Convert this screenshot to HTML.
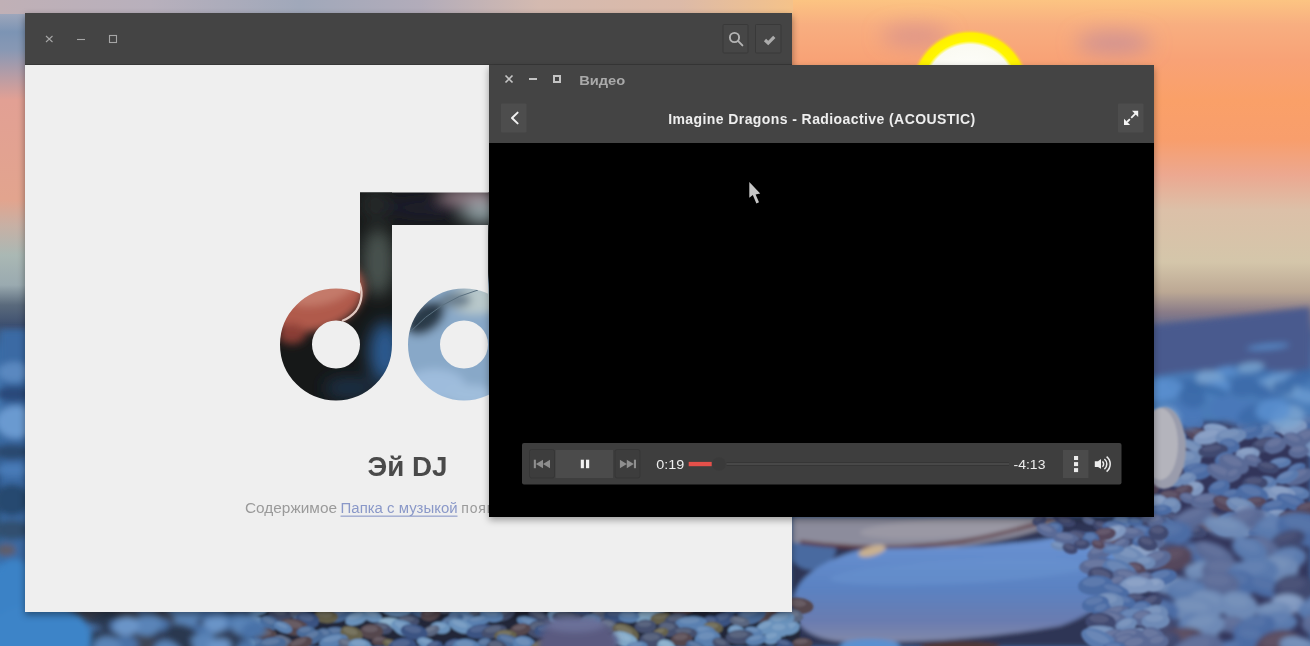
<!DOCTYPE html>
<html><head><meta charset="utf-8">
<style>
*{margin:0;padding:0;box-sizing:border-box}
html,body{width:1310px;height:646px;overflow:hidden;font-family:"Liberation Sans",sans-serif}
body{position:relative;background:#4a6fa0}
#bg{position:absolute;left:0;top:0;width:1310px;height:646px}
.win{position:absolute}
#w1{left:25px;top:13px;width:767px;height:599px;background:#efefef;box-shadow:0 3px 7px rgba(0,0,0,.4)}
#w1 .hb{position:absolute;left:0;top:0;width:767px;height:52px;background:#444444;border-bottom:1px solid #383838}
#w2{left:489px;top:65px;width:665px;height:452px;background:#000;box-shadow:0 3px 7px rgba(0,0,0,.35)}
#w2 .hb{position:absolute;left:0;top:0;width:665px;height:78px;background:#444444}
.ab{position:absolute}
.t{position:absolute;white-space:nowrap}
</style></head><body>
<svg id="bg" width="1310" height="646" viewBox="0 0 1310 646"><defs><linearGradient id="gR" x1="0" y1="0" x2="0" y2="646" gradientUnits="userSpaceOnUse"><stop offset="0.0000" stop-color="#fcc482"/><stop offset="0.0387" stop-color="#f8ae80"/><stop offset="0.0929" stop-color="#f8a276"/><stop offset="0.1548" stop-color="#faa068"/><stop offset="0.2167" stop-color="#f89e6c"/><stop offset="0.2709" stop-color="#eca890"/><stop offset="0.3251" stop-color="#dcc0a8"/><stop offset="0.4056" stop-color="#d4c6aa"/><stop offset="0.4520" stop-color="#bca894"/><stop offset="0.4830" stop-color="#8a7c88"/><stop offset="0.5186" stop-color="#4e6090"/><stop offset="0.6037" stop-color="#4a78b4"/><stop offset="1.0000" stop-color="#44689c"/></linearGradient><linearGradient id="gL" x1="0" y1="0" x2="0" y2="646" gradientUnits="userSpaceOnUse"><stop offset="0.0000" stop-color="#c4b0b4"/><stop offset="0.0186" stop-color="#a0a8bc"/><stop offset="0.0495" stop-color="#7c94b4"/><stop offset="0.0774" stop-color="#8898b4"/><stop offset="0.1115" stop-color="#b09ca8"/><stop offset="0.1548" stop-color="#e2a094"/><stop offset="0.3096" stop-color="#e2a48e"/><stop offset="0.3483" stop-color="#c8b0a4"/><stop offset="0.3947" stop-color="#aab8b4"/><stop offset="0.4412" stop-color="#9aaab0"/><stop offset="0.4721" stop-color="#5a6a7c"/><stop offset="0.5031" stop-color="#3e5070"/><stop offset="0.5418" stop-color="#3a6aa4"/><stop offset="0.6192" stop-color="#4a80b8"/><stop offset="0.6811" stop-color="#3a6aa0"/><stop offset="0.7430" stop-color="#2c5080"/><stop offset="0.8204" stop-color="#305478"/><stop offset="0.8824" stop-color="#3a7cc0"/><stop offset="1.0000" stop-color="#3a80c0"/></linearGradient><linearGradient id="gT" x1="0" y1="0" x2="1310" y2="0" gradientUnits="userSpaceOnUse"><stop offset="0.0000" stop-color="#c0b0b6"/><stop offset="0.1145" stop-color="#b8b0bc"/><stop offset="0.2290" stop-color="#a0a8ba"/><stop offset="0.3206" stop-color="#b2acba"/><stop offset="0.4122" stop-color="#d4bab0"/><stop offset="0.5191" stop-color="#dcbaa8"/><stop offset="0.6031" stop-color="#f4c28a"/><stop offset="1.0000" stop-color="#fcc480"/></linearGradient><radialGradient id="sunG" cx="970" cy="89" r="60" gradientUnits="userSpaceOnUse">
      <stop offset="0" stop-color="#ffffff"/><stop offset="0.74" stop-color="#fafaf2"/>
      <stop offset="0.8" stop-color="#fff600"/><stop offset="0.93" stop-color="#fff000"/>
      <stop offset="1" stop-color="#fcb060" stop-opacity="0"/></radialGradient>
    <linearGradient id="stoneG" x1="0" y1="545" x2="0" y2="640" gradientUnits="userSpaceOnUse"><stop offset="0" stop-color="#6890d0"/><stop offset="0.45" stop-color="#5a82c2"/><stop offset="0.8" stop-color="#6a7cb0"/><stop offset="1" stop-color="#8088aa"/></linearGradient>
    <filter id="b3" x="-100%" y="-100%" width="300%" height="300%"><feGaussianBlur stdDeviation="3"/></filter>
    <filter id="b1" x="-100%" y="-100%" width="300%" height="300%"><feGaussianBlur stdDeviation="1.3"/></filter>
    <filter id="b25" x="-100%" y="-100%" width="300%" height="300%"><feGaussianBlur stdDeviation="2.5"/></filter>
    <filter id="b2" x="-100%" y="-100%" width="300%" height="300%"><feGaussianBlur stdDeviation="2"/></filter>
    <filter id="b10" x="-200%" y="-200%" width="500%" height="500%"><feGaussianBlur stdDeviation="10"/></filter></defs><rect width="1310" height="646" fill="url(#gR)"/>
  <rect width="30" height="646" fill="url(#gL)"/>
  <rect x="0" y="0" width="793" height="14" fill="url(#gT)"/>
  <g filter="url(#b10)">
    <ellipse cx="915" cy="36" rx="34" ry="10" fill="#d08c90" opacity="0.75"/>
    <ellipse cx="1114" cy="43" rx="38" ry="11" fill="#c48c98" opacity="0.8"/>
  </g>
  <circle cx="970" cy="89" r="60" fill="url(#sunG)"/><g filter="url(#b2)"><rect x="792" y="517" width="362" height="129" fill="#2e3454"/><ellipse cx="812.0" cy="548.0" rx="24.0" ry="22.0" fill="#4a6aa0"/><path d="M792 517 H1062 Q1050 530 1000 540 Q940 552 880 550 Q820 547 792 542 Z" fill="#8c8c9c"/><ellipse cx="950.0" cy="528.0" rx="90.0" ry="10.0" fill="#9a98a4" transform="rotate(-3 950.0 528.0)"/><path d="M800 542 Q880 553 960 542 Q1010 533 1055 518" stroke="#5a3038" stroke-width="3.5" fill="none"/><path d="M866 548 Q960 550 1040 540 Q1110 526 1128 548 Q1132 600 1060 626 Q960 644 850 642 Q792 640 792 602 Q798 566 866 548 Z" fill="url(#stoneG)"/><ellipse cx="960.0" cy="572.0" rx="130.0" ry="12.0" fill="#6a94d0" transform="rotate(-3 960.0 572.0)" opacity="0.5"/><ellipse cx="872.0" cy="551.0" rx="14.0" ry="5.0" fill="#c8b090" transform="rotate(-15 872.0 551.0)"/><ellipse cx="870.0" cy="646.0" rx="30.0" ry="7.0" fill="#5a90d0"/><ellipse cx="960.0" cy="646.0" rx="40.0" ry="5.0" fill="#503838"/></g><rect x="1150" y="418" width="160" height="228" fill="#32365a" filter="url(#b3)"/><g filter="url(#b1)"><ellipse cx="1236.0" cy="405.5" rx="11.0" ry="5.7" fill="#8098c0" transform="rotate(-6 1236.0 405.5)"/><ellipse cx="1234.9" cy="403.5" rx="7.1" ry="2.6" fill="#8aa0c5" transform="rotate(-6 1234.9 403.5)"/><ellipse cx="1284.1" cy="406.7" rx="10.6" ry="5.1" fill="#404870" transform="rotate(-8 1284.1 406.7)"/><ellipse cx="1283.0" cy="404.9" rx="6.9" ry="2.3" fill="#4f567b" transform="rotate(-8 1283.0 404.9)"/><ellipse cx="1253.7" cy="407.0" rx="15.3" ry="8.3" fill="#5a6a96" transform="rotate(16 1253.7 407.0)"/><ellipse cx="1252.1" cy="404.1" rx="9.9" ry="3.7" fill="#67759e" transform="rotate(16 1252.1 404.1)"/><ellipse cx="1208.0" cy="409.6" rx="12.5" ry="6.7" fill="#404870" transform="rotate(3 1208.0 409.6)"/><ellipse cx="1206.8" cy="407.2" rx="8.1" ry="3.0" fill="#4f567b" transform="rotate(3 1206.8 407.2)"/><ellipse cx="1264.2" cy="410.9" rx="17.6" ry="8.9" fill="#5a6a96" transform="rotate(20 1264.2 410.9)"/><ellipse cx="1262.4" cy="407.8" rx="11.4" ry="4.0" fill="#67759e" transform="rotate(20 1262.4 407.8)"/><ellipse cx="1224.3" cy="411.7" rx="8.4" ry="5.9" fill="#404870" transform="rotate(-18 1224.3 411.7)"/><ellipse cx="1223.4" cy="409.7" rx="5.5" ry="2.7" fill="#4f567b" transform="rotate(-18 1223.4 409.7)"/><ellipse cx="1155.9" cy="412.8" rx="15.2" ry="7.3" fill="#5a6a96" transform="rotate(-14 1155.9 412.8)"/><ellipse cx="1154.4" cy="410.3" rx="9.9" ry="3.3" fill="#67759e" transform="rotate(-14 1154.4 410.3)"/><ellipse cx="1306.6" cy="414.9" rx="13.6" ry="6.4" fill="#5a7aae" transform="rotate(21 1306.6 414.9)"/><ellipse cx="1305.2" cy="412.7" rx="8.9" ry="2.9" fill="#6784b4" transform="rotate(21 1305.2 412.7)"/><ellipse cx="1180.5" cy="415.0" rx="11.7" ry="8.8" fill="#5a6a96" transform="rotate(-4 1180.5 415.0)"/><ellipse cx="1179.3" cy="411.9" rx="7.6" ry="3.9" fill="#67759e" transform="rotate(-4 1179.3 411.9)"/><ellipse cx="1172.1" cy="415.2" rx="13.8" ry="6.7" fill="#4c6ca4" transform="rotate(-1 1172.1 415.2)"/><ellipse cx="1170.7" cy="412.9" rx="9.0" ry="3.0" fill="#5a77ab" transform="rotate(-1 1170.7 412.9)"/><ellipse cx="1182.6" cy="417.6" rx="11.1" ry="6.0" fill="#4c6ca4" transform="rotate(14 1182.6 417.6)"/><ellipse cx="1181.5" cy="415.5" rx="7.2" ry="2.7" fill="#5a77ab" transform="rotate(14 1181.5 415.5)"/><ellipse cx="1267.3" cy="420.0" rx="11.4" ry="8.3" fill="#4c6ca4" transform="rotate(22 1267.3 420.0)"/><ellipse cx="1266.2" cy="417.1" rx="7.4" ry="3.7" fill="#5a77ab" transform="rotate(22 1266.2 417.1)"/><ellipse cx="1191.7" cy="420.0" rx="12.5" ry="7.4" fill="#4c6ca4" transform="rotate(24 1191.7 420.0)"/><ellipse cx="1190.4" cy="417.4" rx="8.1" ry="3.3" fill="#5a77ab" transform="rotate(24 1190.4 417.4)"/><ellipse cx="1234.0" cy="420.9" rx="12.0" ry="6.6" fill="#404870" transform="rotate(5 1234.0 420.9)"/><ellipse cx="1232.8" cy="418.6" rx="7.8" ry="3.0" fill="#4f567b" transform="rotate(5 1232.8 418.6)"/><ellipse cx="1308.6" cy="421.8" rx="11.6" ry="8.7" fill="#4c6ca4" transform="rotate(2 1308.6 421.8)"/><ellipse cx="1307.4" cy="418.8" rx="7.6" ry="3.9" fill="#5a77ab" transform="rotate(2 1307.4 418.8)"/><ellipse cx="1247.5" cy="423.9" rx="10.7" ry="6.8" fill="#5a6a96" transform="rotate(-7 1247.5 423.9)"/><ellipse cx="1246.4" cy="421.5" rx="7.0" ry="3.1" fill="#67759e" transform="rotate(-7 1246.4 421.5)"/><ellipse cx="1157.1" cy="424.8" rx="14.2" ry="6.7" fill="#4c6ca4" transform="rotate(-2 1157.1 424.8)"/><ellipse cx="1155.7" cy="422.5" rx="9.2" ry="3.0" fill="#5a77ab" transform="rotate(-2 1155.7 422.5)"/><ellipse cx="1284.4" cy="425.7" rx="16.8" ry="8.6" fill="#6e8ab6" transform="rotate(14 1284.4 425.7)"/><ellipse cx="1282.7" cy="422.7" rx="10.9" ry="3.9" fill="#7993bb" transform="rotate(14 1282.7 422.7)"/><ellipse cx="1140.4" cy="426.9" rx="12.5" ry="7.5" fill="#404870" transform="rotate(-1 1140.4 426.9)"/><ellipse cx="1139.2" cy="424.3" rx="8.1" ry="3.4" fill="#4f567b" transform="rotate(-1 1139.2 424.3)"/><ellipse cx="1293.3" cy="428.0" rx="13.9" ry="8.1" fill="#8098c0" transform="rotate(-15 1293.3 428.0)"/><ellipse cx="1292.0" cy="425.2" rx="9.0" ry="3.7" fill="#8aa0c5" transform="rotate(-15 1292.0 425.2)"/><ellipse cx="1216.2" cy="429.1" rx="13.0" ry="5.7" fill="#8098c0" transform="rotate(10 1216.2 429.1)"/><ellipse cx="1214.9" cy="427.1" rx="8.4" ry="2.5" fill="#8aa0c5" transform="rotate(10 1214.9 427.1)"/><ellipse cx="1264.8" cy="431.2" rx="11.1" ry="7.7" fill="#5a7aae" transform="rotate(-18 1264.8 431.2)"/><ellipse cx="1263.7" cy="428.5" rx="7.2" ry="3.5" fill="#6784b4" transform="rotate(-18 1263.7 428.5)"/><ellipse cx="1250.7" cy="431.6" rx="12.6" ry="7.2" fill="#4c6ca4" transform="rotate(-17 1250.7 431.6)"/><ellipse cx="1249.4" cy="429.1" rx="8.2" ry="3.2" fill="#5a77ab" transform="rotate(-17 1249.4 429.1)"/><ellipse cx="1142.1" cy="431.7" rx="14.5" ry="6.4" fill="#4c6ca4" transform="rotate(16 1142.1 431.7)"/><ellipse cx="1140.7" cy="429.5" rx="9.5" ry="2.9" fill="#5a77ab" transform="rotate(16 1140.7 429.5)"/><ellipse cx="1198.5" cy="434.6" rx="14.9" ry="6.8" fill="#54465c" transform="rotate(24 1198.5 434.6)"/><ellipse cx="1197.0" cy="432.2" rx="9.7" ry="3.0" fill="#615469" transform="rotate(24 1197.0 432.2)"/><ellipse cx="1209.4" cy="436.6" rx="16.2" ry="7.3" fill="#8098c0" transform="rotate(-14 1209.4 436.6)"/><ellipse cx="1207.8" cy="434.1" rx="10.5" ry="3.3" fill="#8aa0c5" transform="rotate(-14 1207.8 434.1)"/><ellipse cx="1230.8" cy="436.6" rx="15.6" ry="8.2" fill="#6e8ab6" transform="rotate(-10 1230.8 436.6)"/><ellipse cx="1229.2" cy="433.7" rx="10.2" ry="3.7" fill="#7993bb" transform="rotate(-10 1229.2 433.7)"/><ellipse cx="1306.5" cy="437.8" rx="12.5" ry="8.8" fill="#5a6a96" transform="rotate(-17 1306.5 437.8)"/><ellipse cx="1305.2" cy="434.7" rx="8.2" ry="4.0" fill="#67759e" transform="rotate(-17 1305.2 434.7)"/><ellipse cx="1155.4" cy="438.1" rx="10.7" ry="6.6" fill="#5a6a96" transform="rotate(-21 1155.4 438.1)"/><ellipse cx="1154.3" cy="435.8" rx="7.0" ry="3.0" fill="#67759e" transform="rotate(-21 1154.3 435.8)"/><ellipse cx="1176.1" cy="438.9" rx="10.6" ry="6.5" fill="#5a7aae" transform="rotate(-18 1176.1 438.9)"/><ellipse cx="1175.0" cy="436.7" rx="6.9" ry="2.9" fill="#6784b4" transform="rotate(-18 1175.0 436.7)"/><ellipse cx="1293.9" cy="440.2" rx="11.3" ry="7.3" fill="#5a6a96" transform="rotate(22 1293.9 440.2)"/><ellipse cx="1292.8" cy="437.7" rx="7.3" ry="3.3" fill="#67759e" transform="rotate(22 1292.8 437.7)"/><ellipse cx="1273.0" cy="440.9" rx="9.8" ry="7.4" fill="#4c6ca4" transform="rotate(7 1273.0 440.9)"/><ellipse cx="1272.1" cy="438.3" rx="6.3" ry="3.3" fill="#5a77ab" transform="rotate(7 1272.1 438.3)"/><ellipse cx="1265.5" cy="444.8" rx="14.6" ry="7.4" fill="#404870" transform="rotate(-12 1265.5 444.8)"/><ellipse cx="1264.0" cy="442.2" rx="9.5" ry="3.3" fill="#4f567b" transform="rotate(-12 1264.0 442.2)"/><ellipse cx="1275.2" cy="445.5" rx="11.5" ry="8.0" fill="#5a6a96" transform="rotate(-18 1275.2 445.5)"/><ellipse cx="1274.0" cy="442.7" rx="7.5" ry="3.6" fill="#67759e" transform="rotate(-18 1274.0 442.7)"/><ellipse cx="1229.6" cy="445.7" rx="10.6" ry="7.0" fill="#4c6ca4" transform="rotate(11 1229.6 445.7)"/><ellipse cx="1228.5" cy="443.2" rx="6.9" ry="3.2" fill="#5a77ab" transform="rotate(11 1228.5 443.2)"/><ellipse cx="1148.1" cy="446.5" rx="11.1" ry="8.1" fill="#6e8ab6" transform="rotate(-19 1148.1 446.5)"/><ellipse cx="1147.0" cy="443.7" rx="7.2" ry="3.7" fill="#7993bb" transform="rotate(-19 1147.0 443.7)"/><ellipse cx="1162.6" cy="446.7" rx="11.6" ry="8.5" fill="#5a6a96" transform="rotate(-9 1162.6 446.7)"/><ellipse cx="1161.4" cy="443.7" rx="7.5" ry="3.8" fill="#67759e" transform="rotate(-9 1161.4 443.7)"/><ellipse cx="1315.6" cy="448.4" rx="11.4" ry="8.7" fill="#6e8ab6" transform="rotate(-17 1315.6 448.4)"/><ellipse cx="1314.4" cy="445.3" rx="7.4" ry="3.9" fill="#7993bb" transform="rotate(-17 1314.4 445.3)"/><ellipse cx="1191.4" cy="448.4" rx="15.8" ry="7.7" fill="#6e8ab6" transform="rotate(24 1191.4 448.4)"/><ellipse cx="1189.8" cy="445.7" rx="10.3" ry="3.5" fill="#7993bb" transform="rotate(24 1189.8 445.7)"/><ellipse cx="1213.1" cy="450.6" rx="15.0" ry="6.8" fill="#404870" transform="rotate(-7 1213.1 450.6)"/><ellipse cx="1211.6" cy="448.2" rx="9.8" ry="3.0" fill="#4f567b" transform="rotate(-7 1211.6 448.2)"/><ellipse cx="1298.7" cy="451.6" rx="10.4" ry="6.7" fill="#5a6a96" transform="rotate(-6 1298.7 451.6)"/><ellipse cx="1297.7" cy="449.2" rx="6.8" ry="3.0" fill="#67759e" transform="rotate(-6 1297.7 449.2)"/><ellipse cx="1247.7" cy="453.8" rx="12.1" ry="6.5" fill="#8098c0" transform="rotate(-3 1247.7 453.8)"/><ellipse cx="1246.5" cy="451.5" rx="7.9" ry="2.9" fill="#8aa0c5" transform="rotate(-3 1246.5 451.5)"/><ellipse cx="1181.5" cy="455.3" rx="14.4" ry="8.5" fill="#404870" transform="rotate(12 1181.5 455.3)"/><ellipse cx="1180.1" cy="452.3" rx="9.3" ry="3.8" fill="#4f567b" transform="rotate(12 1180.1 452.3)"/><ellipse cx="1224.0" cy="458.4" rx="10.0" ry="5.8" fill="#4c6ca4" transform="rotate(-23 1224.0 458.4)"/><ellipse cx="1223.0" cy="456.4" rx="6.5" ry="2.6" fill="#5a77ab" transform="rotate(-23 1223.0 456.4)"/><ellipse cx="1186.9" cy="459.6" rx="14.3" ry="9.1" fill="#6e8ab6" transform="rotate(-1 1186.9 459.6)"/><ellipse cx="1185.5" cy="456.4" rx="9.3" ry="4.1" fill="#7993bb" transform="rotate(-1 1185.5 456.4)"/><ellipse cx="1163.0" cy="459.9" rx="15.1" ry="8.2" fill="#5a6a96" transform="rotate(-20 1163.0 459.9)"/><ellipse cx="1161.5" cy="457.0" rx="9.8" ry="3.7" fill="#67759e" transform="rotate(-20 1161.5 457.0)"/><ellipse cx="1252.9" cy="460.6" rx="9.3" ry="6.0" fill="#5a6a96" transform="rotate(19 1252.9 460.6)"/><ellipse cx="1252.0" cy="458.5" rx="6.0" ry="2.7" fill="#67759e" transform="rotate(19 1252.0 458.5)"/><ellipse cx="1149.0" cy="461.5" rx="9.7" ry="5.8" fill="#4c6ca4" transform="rotate(-11 1149.0 461.5)"/><ellipse cx="1148.0" cy="459.5" rx="6.3" ry="2.6" fill="#5a77ab" transform="rotate(-11 1148.0 459.5)"/><ellipse cx="1280.2" cy="462.8" rx="11.1" ry="5.4" fill="#5a7aae" transform="rotate(-7 1280.2 462.8)"/><ellipse cx="1279.1" cy="460.9" rx="7.2" ry="2.4" fill="#6784b4" transform="rotate(-7 1279.1 460.9)"/><ellipse cx="1233.9" cy="464.1" rx="15.8" ry="9.0" fill="#5a6a96" transform="rotate(22 1233.9 464.1)"/><ellipse cx="1232.4" cy="460.9" rx="10.3" ry="4.1" fill="#67759e" transform="rotate(22 1232.4 460.9)"/><ellipse cx="1268.1" cy="467.5" rx="11.3" ry="5.7" fill="#404870" transform="rotate(11 1268.1 467.5)"/><ellipse cx="1267.0" cy="465.5" rx="7.3" ry="2.6" fill="#4f567b" transform="rotate(11 1267.0 465.5)"/><ellipse cx="1296.7" cy="468.6" rx="9.5" ry="5.2" fill="#4c6ca4" transform="rotate(-21 1296.7 468.6)"/><ellipse cx="1295.7" cy="466.8" rx="6.2" ry="2.4" fill="#5a77ab" transform="rotate(-21 1295.7 466.8)"/><ellipse cx="1197.5" cy="469.5" rx="14.3" ry="6.6" fill="#4c6ca4" transform="rotate(-2 1197.5 469.5)"/><ellipse cx="1196.1" cy="467.2" rx="9.3" ry="3.0" fill="#5a77ab" transform="rotate(-2 1196.1 467.2)"/><ellipse cx="1199.9" cy="472.5" rx="12.5" ry="7.1" fill="#4c6ca4" transform="rotate(-13 1199.9 472.5)"/><ellipse cx="1198.6" cy="470.0" rx="8.1" ry="3.2" fill="#5a77ab" transform="rotate(-13 1198.6 470.0)"/><ellipse cx="1221.5" cy="473.0" rx="15.7" ry="8.1" fill="#5a6a96" transform="rotate(24 1221.5 473.0)"/><ellipse cx="1219.9" cy="470.2" rx="10.2" ry="3.7" fill="#67759e" transform="rotate(24 1219.9 470.2)"/><ellipse cx="1233.6" cy="474.7" rx="8.3" ry="6.4" fill="#5a6a96" transform="rotate(-23 1233.6 474.7)"/><ellipse cx="1232.8" cy="472.5" rx="5.4" ry="2.9" fill="#67759e" transform="rotate(-23 1232.8 472.5)"/><ellipse cx="1298.9" cy="476.9" rx="15.2" ry="7.4" fill="#5a6a96" transform="rotate(-20 1298.9 476.9)"/><ellipse cx="1297.3" cy="474.3" rx="9.9" ry="3.3" fill="#67759e" transform="rotate(-20 1297.3 474.3)"/><ellipse cx="1287.2" cy="477.0" rx="12.0" ry="6.0" fill="#5a7aae" transform="rotate(-22 1287.2 477.0)"/><ellipse cx="1286.0" cy="474.9" rx="7.8" ry="2.7" fill="#6784b4" transform="rotate(-22 1286.0 474.9)"/><ellipse cx="1187.2" cy="478.7" rx="9.2" ry="6.3" fill="#6e8ab6" transform="rotate(-12 1187.2 478.7)"/><ellipse cx="1186.3" cy="476.5" rx="6.0" ry="2.8" fill="#7993bb" transform="rotate(-12 1186.3 476.5)"/><ellipse cx="1172.3" cy="479.8" rx="11.1" ry="5.9" fill="#6e8ab6" transform="rotate(24 1172.3 479.8)"/><ellipse cx="1171.2" cy="477.8" rx="7.2" ry="2.7" fill="#7993bb" transform="rotate(24 1171.2 477.8)"/><ellipse cx="1145.9" cy="481.1" rx="10.9" ry="6.1" fill="#5a6a96" transform="rotate(-21 1145.9 481.1)"/><ellipse cx="1144.8" cy="479.0" rx="7.1" ry="2.7" fill="#67759e" transform="rotate(-21 1144.8 479.0)"/><ellipse cx="1267.2" cy="482.7" rx="9.8" ry="6.8" fill="#5a7aae" transform="rotate(5 1267.2 482.7)"/><ellipse cx="1266.2" cy="480.3" rx="6.3" ry="3.1" fill="#6784b4" transform="rotate(5 1266.2 480.3)"/><ellipse cx="1255.1" cy="483.0" rx="12.7" ry="6.9" fill="#404870" transform="rotate(-1 1255.1 483.0)"/><ellipse cx="1253.8" cy="480.6" rx="8.2" ry="3.1" fill="#4f567b" transform="rotate(-1 1253.8 480.6)"/><ellipse cx="1147.3" cy="486.4" rx="12.2" ry="7.8" fill="#54465c" transform="rotate(21 1147.3 486.4)"/><ellipse cx="1146.1" cy="483.7" rx="7.9" ry="3.5" fill="#615469" transform="rotate(21 1146.1 483.7)"/><ellipse cx="1219.2" cy="487.9" rx="11.3" ry="7.4" fill="#4c6ca4" transform="rotate(-19 1219.2 487.9)"/><ellipse cx="1218.1" cy="485.3" rx="7.3" ry="3.4" fill="#5a77ab" transform="rotate(-19 1218.1 485.3)"/><ellipse cx="1194.3" cy="488.7" rx="9.7" ry="7.3" fill="#8098c0" transform="rotate(-9 1194.3 488.7)"/><ellipse cx="1193.3" cy="486.1" rx="6.3" ry="3.3" fill="#8aa0c5" transform="rotate(-9 1193.3 486.1)"/><ellipse cx="1319.8" cy="490.4" rx="8.9" ry="5.6" fill="#6e8ab6" transform="rotate(-4 1319.8 490.4)"/><ellipse cx="1318.9" cy="488.4" rx="5.8" ry="2.5" fill="#7993bb" transform="rotate(-4 1318.9 488.4)"/><ellipse cx="1182.3" cy="492.0" rx="11.6" ry="6.3" fill="#54465c" transform="rotate(-23 1182.3 492.0)"/><ellipse cx="1181.2" cy="489.8" rx="7.5" ry="2.9" fill="#615469" transform="rotate(-23 1181.2 489.8)"/><ellipse cx="1268.2" cy="492.8" rx="10.1" ry="6.1" fill="#6e8ab6" transform="rotate(-4 1268.2 492.8)"/><ellipse cx="1267.2" cy="490.7" rx="6.5" ry="2.7" fill="#7993bb" transform="rotate(-4 1267.2 490.7)"/><ellipse cx="1297.2" cy="493.0" rx="12.7" ry="6.8" fill="#5a7aae" transform="rotate(8 1297.2 493.0)"/><ellipse cx="1296.0" cy="490.6" rx="8.3" ry="3.1" fill="#6784b4" transform="rotate(8 1296.0 490.6)"/><ellipse cx="1281.4" cy="493.6" rx="14.2" ry="7.8" fill="#8098c0" transform="rotate(8 1281.4 493.6)"/><ellipse cx="1280.0" cy="490.9" rx="9.2" ry="3.5" fill="#8aa0c5" transform="rotate(8 1280.0 490.9)"/><ellipse cx="1252.7" cy="493.9" rx="16.1" ry="9.2" fill="#4c6ca4" transform="rotate(16 1252.7 493.9)"/><ellipse cx="1251.1" cy="490.7" rx="10.5" ry="4.1" fill="#5a77ab" transform="rotate(16 1251.1 490.7)"/><ellipse cx="1231.1" cy="494.9" rx="10.2" ry="5.9" fill="#4c6ca4" transform="rotate(-12 1231.1 494.9)"/><ellipse cx="1230.0" cy="492.8" rx="6.6" ry="2.6" fill="#5a77ab" transform="rotate(-12 1230.0 492.8)"/><ellipse cx="1171.0" cy="496.3" rx="12.2" ry="6.6" fill="#54465c" transform="rotate(3 1171.0 496.3)"/><ellipse cx="1169.7" cy="494.0" rx="8.0" ry="3.0" fill="#615469" transform="rotate(3 1169.7 494.0)"/><ellipse cx="1187.7" cy="498.2" rx="8.3" ry="5.1" fill="#5a6a96" transform="rotate(18 1187.7 498.2)"/><ellipse cx="1186.9" cy="496.4" rx="5.4" ry="2.3" fill="#67759e" transform="rotate(18 1186.9 496.4)"/><ellipse cx="1206.0" cy="501.0" rx="15.4" ry="7.8" fill="#5a6a96" transform="rotate(-7 1206.0 501.0)"/><ellipse cx="1204.4" cy="498.3" rx="10.0" ry="3.5" fill="#67759e" transform="rotate(-7 1204.4 498.3)"/><ellipse cx="1158.8" cy="501.6" rx="9.4" ry="7.0" fill="#8098c0" transform="rotate(11 1158.8 501.6)"/><ellipse cx="1157.9" cy="499.1" rx="6.1" ry="3.1" fill="#8aa0c5" transform="rotate(11 1157.9 499.1)"/><ellipse cx="1256.0" cy="502.2" rx="10.6" ry="5.4" fill="#54465c" transform="rotate(-3 1256.0 502.2)"/><ellipse cx="1254.9" cy="500.3" rx="6.9" ry="2.4" fill="#615469" transform="rotate(-3 1254.9 500.3)"/><ellipse cx="1291.9" cy="502.2" rx="16.4" ry="7.4" fill="#4c6ca4" transform="rotate(21 1291.9 502.2)"/><ellipse cx="1290.2" cy="499.6" rx="10.7" ry="3.3" fill="#5a77ab" transform="rotate(21 1290.2 499.6)"/><ellipse cx="1224.4" cy="503.5" rx="12.0" ry="7.0" fill="#54465c" transform="rotate(22 1224.4 503.5)"/><ellipse cx="1223.2" cy="501.1" rx="7.8" ry="3.1" fill="#615469" transform="rotate(22 1223.2 501.1)"/><ellipse cx="1241.0" cy="505.7" rx="15.0" ry="7.6" fill="#6e8ab6" transform="rotate(16 1241.0 505.7)"/><ellipse cx="1239.5" cy="503.0" rx="9.8" ry="3.4" fill="#7993bb" transform="rotate(16 1239.5 503.0)"/><ellipse cx="1171.3" cy="505.7" rx="9.9" ry="8.2" fill="#6e8ab6" transform="rotate(4 1171.3 505.7)"/><ellipse cx="1170.3" cy="502.9" rx="6.5" ry="3.7" fill="#7993bb" transform="rotate(4 1170.3 502.9)"/><ellipse cx="1274.9" cy="506.8" rx="14.3" ry="6.9" fill="#4c6ca4" transform="rotate(-11 1274.9 506.8)"/><ellipse cx="1273.5" cy="504.3" rx="9.3" ry="3.1" fill="#5a77ab" transform="rotate(-11 1273.5 504.3)"/><ellipse cx="1306.8" cy="508.3" rx="11.3" ry="6.1" fill="#54465c" transform="rotate(-13 1306.8 508.3)"/><ellipse cx="1305.7" cy="506.2" rx="7.3" ry="2.7" fill="#615469" transform="rotate(-13 1305.7 506.2)"/><ellipse cx="1245.6" cy="513.5" rx="10.6" ry="8.0" fill="#8098c0" transform="rotate(17 1245.6 513.5)"/><ellipse cx="1244.5" cy="510.8" rx="6.9" ry="3.6" fill="#8aa0c5" transform="rotate(17 1244.5 510.8)"/><ellipse cx="1277.3" cy="516.5" rx="12.6" ry="6.7" fill="#8098c0" transform="rotate(-0 1277.3 516.5)"/><ellipse cx="1276.0" cy="514.1" rx="8.2" ry="3.0" fill="#8aa0c5" transform="rotate(-0 1276.0 514.1)"/><ellipse cx="1211.0" cy="517.1" rx="8.8" ry="5.1" fill="#54465c" transform="rotate(20 1211.0 517.1)"/><ellipse cx="1210.1" cy="515.3" rx="5.7" ry="2.3" fill="#615469" transform="rotate(20 1210.1 515.3)"/><ellipse cx="1171.2" cy="517.7" rx="12.3" ry="6.0" fill="#404870" transform="rotate(18 1171.2 517.7)"/><ellipse cx="1170.0" cy="515.6" rx="8.0" ry="2.7" fill="#4f567b" transform="rotate(18 1170.0 515.6)"/><ellipse cx="1261.0" cy="518.3" rx="14.7" ry="7.3" fill="#6e8ab6" transform="rotate(1 1261.0 518.3)"/><ellipse cx="1259.5" cy="515.8" rx="9.5" ry="3.3" fill="#7993bb" transform="rotate(1 1259.5 515.8)"/><ellipse cx="1228.2" cy="520.0" rx="11.3" ry="7.2" fill="#4c6ca4" transform="rotate(-24 1228.2 520.0)"/><ellipse cx="1227.1" cy="517.5" rx="7.3" ry="3.2" fill="#5a77ab" transform="rotate(-24 1227.1 517.5)"/><ellipse cx="1303.9" cy="520.0" rx="11.0" ry="6.6" fill="#54465c" transform="rotate(-5 1303.9 520.0)"/><ellipse cx="1302.8" cy="517.7" rx="7.2" ry="3.0" fill="#615469" transform="rotate(-5 1302.8 517.7)"/><ellipse cx="1294.2" cy="520.6" rx="16.8" ry="9.9" fill="#54465c" transform="rotate(9 1294.2 520.6)"/><ellipse cx="1292.6" cy="517.2" rx="10.9" ry="4.5" fill="#615469" transform="rotate(9 1292.6 517.2)"/><ellipse cx="1197.1" cy="521.4" rx="14.2" ry="7.0" fill="#404870" transform="rotate(9 1197.1 521.4)"/><ellipse cx="1195.7" cy="518.9" rx="9.2" ry="3.2" fill="#4f567b" transform="rotate(9 1195.7 518.9)"/><ellipse cx="1158.6" cy="522.8" rx="11.5" ry="6.2" fill="#6e8ab6" transform="rotate(-7 1158.6 522.8)"/><ellipse cx="1157.4" cy="520.6" rx="7.5" ry="2.8" fill="#7993bb" transform="rotate(-7 1157.4 520.6)"/><ellipse cx="1311.4" cy="525.0" rx="14.2" ry="8.0" fill="#4c6ca4" transform="rotate(21 1311.4 525.0)"/><ellipse cx="1310.0" cy="522.1" rx="9.3" ry="3.6" fill="#5a77ab" transform="rotate(21 1310.0 522.1)"/><ellipse cx="1207.5" cy="525.6" rx="12.4" ry="5.6" fill="#54465c" transform="rotate(8 1207.5 525.6)"/><ellipse cx="1206.3" cy="523.6" rx="8.0" ry="2.5" fill="#615469" transform="rotate(8 1206.3 523.6)"/><ellipse cx="1239.9" cy="527.2" rx="17.1" ry="9.1" fill="#8098c0" transform="rotate(12 1239.9 527.2)"/><ellipse cx="1238.2" cy="524.0" rx="11.1" ry="4.1" fill="#8aa0c5" transform="rotate(12 1238.2 524.0)"/><ellipse cx="1163.7" cy="527.5" rx="11.5" ry="7.6" fill="#5a7aae" transform="rotate(-13 1163.7 527.5)"/><ellipse cx="1162.5" cy="524.9" rx="7.5" ry="3.4" fill="#6784b4" transform="rotate(-13 1162.5 524.9)"/><ellipse cx="1300.4" cy="527.7" rx="15.1" ry="8.3" fill="#6e8ab6" transform="rotate(-5 1300.4 527.7)"/><ellipse cx="1298.9" cy="524.8" rx="9.8" ry="3.7" fill="#7993bb" transform="rotate(-5 1298.9 524.8)"/><ellipse cx="1224.8" cy="528.7" rx="11.6" ry="7.2" fill="#5a7aae" transform="rotate(6 1224.8 528.7)"/><ellipse cx="1223.7" cy="526.2" rx="7.5" ry="3.2" fill="#6784b4" transform="rotate(6 1223.7 526.2)"/><ellipse cx="1146.4" cy="530.1" rx="10.1" ry="7.4" fill="#404870" transform="rotate(11 1146.4 530.1)"/><ellipse cx="1145.4" cy="527.6" rx="6.5" ry="3.3" fill="#4f567b" transform="rotate(11 1145.4 527.6)"/><ellipse cx="1260.7" cy="530.4" rx="13.7" ry="6.2" fill="#4c6ca4" transform="rotate(-12 1260.7 530.4)"/><ellipse cx="1259.4" cy="528.2" rx="8.9" ry="2.8" fill="#5a77ab" transform="rotate(-12 1259.4 528.2)"/><ellipse cx="1191.8" cy="530.5" rx="15.2" ry="6.7" fill="#404870" transform="rotate(13 1191.8 530.5)"/><ellipse cx="1190.3" cy="528.1" rx="9.9" ry="3.0" fill="#4f567b" transform="rotate(13 1190.3 528.1)"/><ellipse cx="1280.0" cy="532.1" rx="9.2" ry="6.6" fill="#8098c0" transform="rotate(19 1280.0 532.1)"/><ellipse cx="1279.1" cy="529.8" rx="6.0" ry="3.0" fill="#8aa0c5" transform="rotate(19 1279.1 529.8)"/><ellipse cx="1172.9" cy="532.4" rx="13.2" ry="7.7" fill="#5a6a96" transform="rotate(20 1172.9 532.4)"/><ellipse cx="1171.5" cy="529.7" rx="8.6" ry="3.5" fill="#67759e" transform="rotate(20 1171.5 529.7)"/></g><g filter="url(#b25)"><ellipse cx="1192.9" cy="517.8" rx="21.6" ry="10.3" fill="#5a6a96" transform="rotate(-21 1192.9 517.8)"/><ellipse cx="1190.7" cy="514.2" rx="14.0" ry="4.6" fill="#63729c" transform="rotate(-21 1190.7 514.2)"/><ellipse cx="1244.2" cy="520.5" rx="22.1" ry="11.5" fill="#5a6a96" transform="rotate(-22 1244.2 520.5)"/><ellipse cx="1242.0" cy="516.4" rx="14.4" ry="5.2" fill="#63729c" transform="rotate(-22 1242.0 516.4)"/><ellipse cx="1151.4" cy="522.2" rx="21.9" ry="11.2" fill="#404870" transform="rotate(20 1151.4 522.2)"/><ellipse cx="1149.2" cy="518.3" rx="14.2" ry="5.0" fill="#4b5278" transform="rotate(20 1149.2 518.3)"/><ellipse cx="1226.4" cy="527.1" rx="23.1" ry="10.7" fill="#6e8ab6" transform="rotate(13 1226.4 527.1)"/><ellipse cx="1224.1" cy="523.4" rx="15.0" ry="4.8" fill="#7691ba" transform="rotate(13 1224.1 523.4)"/><ellipse cx="1277.2" cy="527.7" rx="22.8" ry="12.8" fill="#5a7aae" transform="rotate(-6 1277.2 527.7)"/><ellipse cx="1274.9" cy="523.2" rx="14.8" ry="5.8" fill="#6381b2" transform="rotate(-6 1274.9 523.2)"/><ellipse cx="1303.7" cy="529.3" rx="27.6" ry="16.5" fill="#4c6ca4" transform="rotate(14 1303.7 529.3)"/><ellipse cx="1300.9" cy="523.6" rx="17.9" ry="7.4" fill="#5674a9" transform="rotate(14 1300.9 523.6)"/><ellipse cx="1169.1" cy="534.2" rx="23.7" ry="13.5" fill="#4c6ca4" transform="rotate(-4 1169.1 534.2)"/><ellipse cx="1166.7" cy="529.4" rx="15.4" ry="6.1" fill="#5674a9" transform="rotate(-4 1166.7 529.4)"/><ellipse cx="1287.6" cy="540.6" rx="18.4" ry="10.0" fill="#404870" transform="rotate(-19 1287.6 540.6)"/><ellipse cx="1285.8" cy="537.1" rx="12.0" ry="4.5" fill="#4b5278" transform="rotate(-19 1285.8 537.1)"/><ellipse cx="1261.6" cy="545.6" rx="17.4" ry="8.8" fill="#5a6a96" transform="rotate(20 1261.6 545.6)"/><ellipse cx="1259.9" cy="542.5" rx="11.3" ry="3.9" fill="#63729c" transform="rotate(20 1259.9 542.5)"/><ellipse cx="1149.4" cy="545.7" rx="21.1" ry="11.6" fill="#8098c0" transform="rotate(23 1149.4 545.7)"/><ellipse cx="1147.3" cy="541.7" rx="13.7" ry="5.2" fill="#879ec3" transform="rotate(23 1147.3 541.7)"/><ellipse cx="1249.6" cy="549.5" rx="18.4" ry="11.3" fill="#5a7aae" transform="rotate(22 1249.6 549.5)"/><ellipse cx="1247.7" cy="545.5" rx="11.9" ry="5.1" fill="#6381b2" transform="rotate(22 1247.7 545.5)"/><ellipse cx="1196.1" cy="552.1" rx="14.4" ry="9.3" fill="#4c6ca4" transform="rotate(13 1196.1 552.1)"/><ellipse cx="1194.7" cy="548.9" rx="9.4" ry="4.2" fill="#5674a9" transform="rotate(13 1194.7 548.9)"/><ellipse cx="1213.8" cy="553.5" rx="21.7" ry="10.0" fill="#5a6a96" transform="rotate(24 1213.8 553.5)"/><ellipse cx="1211.7" cy="550.0" rx="14.1" ry="4.5" fill="#63729c" transform="rotate(24 1211.7 550.0)"/><ellipse cx="1165.4" cy="554.0" rx="18.7" ry="11.2" fill="#404870" transform="rotate(-6 1165.4 554.0)"/><ellipse cx="1163.5" cy="550.1" rx="12.2" ry="5.1" fill="#4b5278" transform="rotate(-6 1163.5 550.1)"/><ellipse cx="1287.5" cy="559.1" rx="19.3" ry="11.6" fill="#5a7aae" transform="rotate(-13 1287.5 559.1)"/><ellipse cx="1285.5" cy="555.0" rx="12.5" ry="5.2" fill="#6381b2" transform="rotate(-13 1285.5 555.0)"/><ellipse cx="1173.9" cy="559.1" rx="19.2" ry="12.5" fill="#54465c" transform="rotate(-18 1173.9 559.1)"/><ellipse cx="1171.9" cy="554.7" rx="12.5" ry="5.6" fill="#5e5165" transform="rotate(-18 1171.9 554.7)"/><ellipse cx="1146.3" cy="559.9" rx="22.1" ry="9.9" fill="#54465c" transform="rotate(-4 1146.3 559.9)"/><ellipse cx="1144.1" cy="556.5" rx="14.4" ry="4.4" fill="#5e5165" transform="rotate(-4 1144.1 556.5)"/><ellipse cx="1277.5" cy="568.2" rx="21.6" ry="13.2" fill="#6e8ab6" transform="rotate(0 1277.5 568.2)"/><ellipse cx="1275.4" cy="563.6" rx="14.0" ry="5.9" fill="#7691ba" transform="rotate(0 1275.4 563.6)"/><ellipse cx="1199.9" cy="570.2" rx="15.8" ry="9.1" fill="#6e8ab6" transform="rotate(-10 1199.9 570.2)"/><ellipse cx="1198.3" cy="567.0" rx="10.3" ry="4.1" fill="#7691ba" transform="rotate(-10 1198.3 567.0)"/><ellipse cx="1223.1" cy="571.3" rx="21.4" ry="13.4" fill="#5a6a96" transform="rotate(2 1223.1 571.3)"/><ellipse cx="1221.0" cy="566.6" rx="13.9" ry="6.0" fill="#63729c" transform="rotate(2 1221.0 566.6)"/><ellipse cx="1252.4" cy="573.5" rx="26.4" ry="15.1" fill="#5a7aae" transform="rotate(-10 1252.4 573.5)"/><ellipse cx="1249.7" cy="568.2" rx="17.2" ry="6.8" fill="#6381b2" transform="rotate(-10 1249.7 568.2)"/><ellipse cx="1141.4" cy="580.9" rx="20.8" ry="8.8" fill="#5a6a96" transform="rotate(12 1141.4 580.9)"/><ellipse cx="1139.3" cy="577.8" rx="13.5" ry="3.9" fill="#63729c" transform="rotate(12 1139.3 577.8)"/><ellipse cx="1237.0" cy="583.9" rx="19.9" ry="13.9" fill="#4c6ca4" transform="rotate(3 1237.0 583.9)"/><ellipse cx="1235.0" cy="579.0" rx="13.0" ry="6.2" fill="#5674a9" transform="rotate(3 1235.0 579.0)"/><ellipse cx="1219.4" cy="584.3" rx="20.1" ry="12.9" fill="#5a6a96" transform="rotate(3 1219.4 584.3)"/><ellipse cx="1217.4" cy="579.8" rx="13.1" ry="5.8" fill="#63729c" transform="rotate(3 1217.4 579.8)"/><ellipse cx="1171.8" cy="585.3" rx="17.7" ry="8.9" fill="#6e8ab6" transform="rotate(-8 1171.8 585.3)"/><ellipse cx="1170.0" cy="582.2" rx="11.5" ry="4.0" fill="#7691ba" transform="rotate(-8 1170.0 582.2)"/><ellipse cx="1266.5" cy="587.7" rx="20.8" ry="9.3" fill="#4c6ca4" transform="rotate(14 1266.5 587.7)"/><ellipse cx="1264.4" cy="584.5" rx="13.5" ry="4.2" fill="#5674a9" transform="rotate(14 1264.4 584.5)"/><ellipse cx="1293.6" cy="589.3" rx="20.6" ry="14.7" fill="#404870" transform="rotate(-6 1293.6 589.3)"/><ellipse cx="1291.6" cy="584.1" rx="13.4" ry="6.6" fill="#4b5278" transform="rotate(-6 1291.6 584.1)"/><ellipse cx="1186.4" cy="590.3" rx="19.5" ry="11.6" fill="#5a7aae" transform="rotate(-3 1186.4 590.3)"/><ellipse cx="1184.4" cy="586.2" rx="12.7" ry="5.2" fill="#6381b2" transform="rotate(-3 1184.4 586.2)"/><ellipse cx="1209.4" cy="602.5" rx="21.0" ry="12.2" fill="#6e8ab6" transform="rotate(12 1209.4 602.5)"/><ellipse cx="1207.3" cy="598.2" rx="13.6" ry="5.5" fill="#7691ba" transform="rotate(12 1207.3 598.2)"/><ellipse cx="1287.5" cy="604.0" rx="17.0" ry="10.3" fill="#8098c0" transform="rotate(-0 1287.5 604.0)"/><ellipse cx="1285.8" cy="600.4" rx="11.1" ry="4.7" fill="#879ec3" transform="rotate(-0 1285.8 600.4)"/><ellipse cx="1238.6" cy="605.7" rx="19.5" ry="14.3" fill="#6e8ab6" transform="rotate(11 1238.6 605.7)"/><ellipse cx="1236.6" cy="600.7" rx="12.7" ry="6.4" fill="#7691ba" transform="rotate(11 1236.6 600.7)"/><ellipse cx="1319.6" cy="606.0" rx="22.6" ry="11.3" fill="#5a7aae" transform="rotate(-19 1319.6 606.0)"/><ellipse cx="1317.4" cy="602.1" rx="14.7" ry="5.1" fill="#6381b2" transform="rotate(-19 1317.4 602.1)"/><ellipse cx="1273.5" cy="610.2" rx="18.0" ry="8.4" fill="#6e8ab6" transform="rotate(-2 1273.5 610.2)"/><ellipse cx="1271.7" cy="607.3" rx="11.7" ry="3.8" fill="#7691ba" transform="rotate(-2 1271.7 607.3)"/><ellipse cx="1195.0" cy="610.6" rx="25.4" ry="13.7" fill="#6e8ab6" transform="rotate(7 1195.0 610.6)"/><ellipse cx="1192.4" cy="605.8" rx="16.5" ry="6.2" fill="#7691ba" transform="rotate(7 1192.4 605.8)"/><ellipse cx="1158.6" cy="613.8" rx="20.0" ry="14.9" fill="#4c6ca4" transform="rotate(-10 1158.6 613.8)"/><ellipse cx="1156.6" cy="608.6" rx="13.0" ry="6.7" fill="#5674a9" transform="rotate(-10 1156.6 608.6)"/><ellipse cx="1279.7" cy="622.1" rx="17.9" ry="9.5" fill="#5a7aae" transform="rotate(-2 1279.7 622.1)"/><ellipse cx="1277.9" cy="618.7" rx="11.7" ry="4.3" fill="#6381b2" transform="rotate(-2 1277.9 618.7)"/><ellipse cx="1192.8" cy="623.2" rx="15.6" ry="9.4" fill="#5a7aae" transform="rotate(-15 1192.8 623.2)"/><ellipse cx="1191.3" cy="619.9" rx="10.1" ry="4.2" fill="#6381b2" transform="rotate(-15 1191.3 619.9)"/><ellipse cx="1232.2" cy="624.7" rx="16.0" ry="8.4" fill="#5a6a96" transform="rotate(6 1232.2 624.7)"/><ellipse cx="1230.6" cy="621.7" rx="10.4" ry="3.8" fill="#63729c" transform="rotate(6 1230.6 621.7)"/><ellipse cx="1320.3" cy="625.7" rx="19.1" ry="11.1" fill="#5a6a96" transform="rotate(9 1320.3 625.7)"/><ellipse cx="1318.4" cy="621.8" rx="12.4" ry="5.0" fill="#63729c" transform="rotate(9 1318.4 621.8)"/><ellipse cx="1203.9" cy="626.4" rx="20.8" ry="13.4" fill="#6e8ab6" transform="rotate(-12 1203.9 626.4)"/><ellipse cx="1201.8" cy="621.7" rx="13.5" ry="6.0" fill="#7691ba" transform="rotate(-12 1201.8 621.7)"/><ellipse cx="1158.2" cy="627.4" rx="20.9" ry="13.6" fill="#404870" transform="rotate(8 1158.2 627.4)"/><ellipse cx="1156.1" cy="622.6" rx="13.6" ry="6.1" fill="#4b5278" transform="rotate(8 1156.1 622.6)"/><ellipse cx="1254.3" cy="629.0" rx="22.2" ry="12.9" fill="#4c6ca4" transform="rotate(-20 1254.3 629.0)"/><ellipse cx="1252.1" cy="624.5" rx="14.4" ry="5.8" fill="#5674a9" transform="rotate(-20 1252.1 624.5)"/><ellipse cx="1251.2" cy="637.6" rx="17.5" ry="12.2" fill="#4c6ca4" transform="rotate(6 1251.2 637.6)"/><ellipse cx="1249.5" cy="633.3" rx="11.4" ry="5.5" fill="#5674a9" transform="rotate(6 1249.5 633.3)"/><ellipse cx="1178.0" cy="638.9" rx="25.8" ry="11.0" fill="#54465c" transform="rotate(-8 1178.0 638.9)"/><ellipse cx="1175.4" cy="635.1" rx="16.8" ry="4.9" fill="#5e5165" transform="rotate(-8 1175.4 635.1)"/><ellipse cx="1163.1" cy="644.1" rx="18.1" ry="11.1" fill="#404870" transform="rotate(-23 1163.1 644.1)"/><ellipse cx="1161.3" cy="640.2" rx="11.7" ry="5.0" fill="#4b5278" transform="rotate(-23 1161.3 640.2)"/><ellipse cx="1278.6" cy="645.3" rx="23.6" ry="15.0" fill="#54465c" transform="rotate(-12 1278.6 645.3)"/><ellipse cx="1276.2" cy="640.1" rx="15.3" ry="6.8" fill="#5e5165" transform="rotate(-12 1276.2 640.1)"/><ellipse cx="1297.8" cy="646.4" rx="18.5" ry="9.9" fill="#6e8ab6" transform="rotate(11 1297.8 646.4)"/><ellipse cx="1296.0" cy="642.9" rx="12.0" ry="4.5" fill="#7691ba" transform="rotate(11 1296.0 642.9)"/><ellipse cx="1228.2" cy="650.7" rx="22.8" ry="9.8" fill="#4c6ca4" transform="rotate(-16 1228.2 650.7)"/><ellipse cx="1225.9" cy="647.3" rx="14.8" ry="4.4" fill="#5674a9" transform="rotate(-16 1225.9 647.3)"/><ellipse cx="1196.9" cy="651.5" rx="27.4" ry="16.2" fill="#5a6a96" transform="rotate(-20 1196.9 651.5)"/><ellipse cx="1194.2" cy="645.9" rx="17.8" ry="7.3" fill="#63729c" transform="rotate(-20 1194.2 645.9)"/></g><g filter="url(#b1)"><ellipse cx="1124.1" cy="540.1" rx="14.7" ry="10.6" fill="#404870" transform="rotate(-6 1124.1 540.1)"/><ellipse cx="1122.6" cy="536.4" rx="9.5" ry="4.8" fill="#535a7e" transform="rotate(-6 1122.6 536.4)"/><ellipse cx="1091.2" cy="541.3" rx="13.2" ry="7.9" fill="#6e8ab6" transform="rotate(8 1091.2 541.3)"/><ellipse cx="1089.9" cy="538.5" rx="8.6" ry="3.6" fill="#7c95bd" transform="rotate(8 1089.9 538.5)"/><ellipse cx="1148.2" cy="543.7" rx="15.8" ry="8.3" fill="#5a6a96" transform="rotate(-10 1148.2 543.7)"/><ellipse cx="1146.7" cy="540.7" rx="10.2" ry="3.8" fill="#6a78a0" transform="rotate(-10 1146.7 540.7)"/><ellipse cx="1107.9" cy="544.6" rx="14.7" ry="9.3" fill="#54465c" transform="rotate(-3 1107.9 544.6)"/><ellipse cx="1106.4" cy="541.4" rx="9.6" ry="4.2" fill="#65586c" transform="rotate(-3 1106.4 541.4)"/><ellipse cx="1142.5" cy="548.3" rx="12.5" ry="8.1" fill="#8098c0" transform="rotate(-18 1142.5 548.3)"/><ellipse cx="1141.2" cy="545.4" rx="8.1" ry="3.6" fill="#8ca2c6" transform="rotate(-18 1141.2 545.4)"/><ellipse cx="1119.7" cy="551.2" rx="8.4" ry="6.6" fill="#6e8ab6" transform="rotate(-2 1119.7 551.2)"/><ellipse cx="1118.8" cy="548.8" rx="5.5" ry="3.0" fill="#7c95bd" transform="rotate(-2 1118.8 548.8)"/><ellipse cx="1101.2" cy="551.5" rx="14.9" ry="7.6" fill="#5a6a96" transform="rotate(-24 1101.2 551.5)"/><ellipse cx="1099.7" cy="548.8" rx="9.7" ry="3.4" fill="#6a78a0" transform="rotate(-24 1099.7 548.8)"/><ellipse cx="1143.5" cy="553.0" rx="17.7" ry="9.7" fill="#8098c0" transform="rotate(6 1143.5 553.0)"/><ellipse cx="1141.8" cy="549.6" rx="11.5" ry="4.3" fill="#8ca2c6" transform="rotate(6 1141.8 549.6)"/><ellipse cx="1128.3" cy="555.7" rx="17.5" ry="9.3" fill="#6e8ab6" transform="rotate(19 1128.3 555.7)"/><ellipse cx="1126.6" cy="552.4" rx="11.4" ry="4.2" fill="#7c95bd" transform="rotate(19 1126.6 552.4)"/><ellipse cx="1156.4" cy="559.9" rx="15.3" ry="8.6" fill="#5a6a96" transform="rotate(-20 1156.4 559.9)"/><ellipse cx="1154.9" cy="556.9" rx="10.0" ry="3.9" fill="#6a78a0" transform="rotate(-20 1154.9 556.9)"/><ellipse cx="1144.8" cy="563.0" rx="10.7" ry="6.7" fill="#6e8ab6" transform="rotate(-4 1144.8 563.0)"/><ellipse cx="1143.8" cy="560.6" rx="6.9" ry="3.0" fill="#7c95bd" transform="rotate(-4 1143.8 560.6)"/><ellipse cx="1108.3" cy="565.3" rx="13.4" ry="6.8" fill="#4c6ca4" transform="rotate(23 1108.3 565.3)"/><ellipse cx="1107.0" cy="563.0" rx="8.7" ry="3.1" fill="#5d7aad" transform="rotate(23 1107.0 563.0)"/><ellipse cx="1097.1" cy="566.7" rx="18.0" ry="8.7" fill="#5a6a96" transform="rotate(-2 1097.1 566.7)"/><ellipse cx="1095.3" cy="563.6" rx="11.7" ry="3.9" fill="#6a78a0" transform="rotate(-2 1095.3 563.6)"/><ellipse cx="1135.4" cy="569.6" rx="10.6" ry="7.5" fill="#54465c" transform="rotate(10 1135.4 569.6)"/><ellipse cx="1134.4" cy="567.0" rx="6.9" ry="3.4" fill="#65586c" transform="rotate(10 1134.4 567.0)"/><ellipse cx="1119.4" cy="570.6" rx="17.7" ry="10.4" fill="#5a7aae" transform="rotate(21 1119.4 570.6)"/><ellipse cx="1117.6" cy="567.0" rx="11.5" ry="4.7" fill="#6a87b6" transform="rotate(21 1117.6 567.0)"/><ellipse cx="1102.7" cy="577.4" rx="15.4" ry="9.8" fill="#404870" transform="rotate(19 1102.7 577.4)"/><ellipse cx="1101.1" cy="574.0" rx="10.0" ry="4.4" fill="#535a7e" transform="rotate(19 1101.1 574.0)"/><ellipse cx="1162.0" cy="577.5" rx="15.0" ry="8.0" fill="#4c6ca4" transform="rotate(-12 1162.0 577.5)"/><ellipse cx="1160.5" cy="574.7" rx="9.8" ry="3.6" fill="#5d7aad" transform="rotate(-12 1160.5 574.7)"/><ellipse cx="1129.2" cy="577.8" rx="16.7" ry="7.8" fill="#5a6a96" transform="rotate(17 1129.2 577.8)"/><ellipse cx="1127.6" cy="575.0" rx="10.9" ry="3.5" fill="#6a78a0" transform="rotate(17 1127.6 575.0)"/><ellipse cx="1143.0" cy="580.2" rx="10.7" ry="7.7" fill="#5a6a96" transform="rotate(-18 1143.0 580.2)"/><ellipse cx="1142.0" cy="577.5" rx="6.9" ry="3.4" fill="#6a78a0" transform="rotate(-18 1142.0 577.5)"/><ellipse cx="1118.0" cy="581.9" rx="9.8" ry="6.2" fill="#5a6a96" transform="rotate(-20 1118.0 581.9)"/><ellipse cx="1117.0" cy="579.7" rx="6.3" ry="2.8" fill="#6a78a0" transform="rotate(-20 1117.0 579.7)"/><ellipse cx="1154.3" cy="585.0" rx="10.2" ry="6.7" fill="#8098c0" transform="rotate(-9 1154.3 585.0)"/><ellipse cx="1153.2" cy="582.6" rx="6.7" ry="3.0" fill="#8ca2c6" transform="rotate(-9 1153.2 582.6)"/><ellipse cx="1131.6" cy="585.1" rx="14.1" ry="8.6" fill="#6e8ab6" transform="rotate(-22 1131.6 585.1)"/><ellipse cx="1130.1" cy="582.1" rx="9.2" ry="3.9" fill="#7c95bd" transform="rotate(-22 1130.1 582.1)"/><ellipse cx="1137.5" cy="585.4" rx="16.0" ry="8.4" fill="#8098c0" transform="rotate(-2 1137.5 585.4)"/><ellipse cx="1135.9" cy="582.5" rx="10.4" ry="3.8" fill="#8ca2c6" transform="rotate(-2 1135.9 582.5)"/><ellipse cx="1095.6" cy="585.4" rx="17.6" ry="9.9" fill="#4c6ca4" transform="rotate(-4 1095.6 585.4)"/><ellipse cx="1093.8" cy="582.0" rx="11.5" ry="4.5" fill="#5d7aad" transform="rotate(-4 1093.8 582.0)"/><ellipse cx="1114.8" cy="590.9" rx="15.0" ry="7.0" fill="#4c6ca4" transform="rotate(16 1114.8 590.9)"/><ellipse cx="1113.3" cy="588.5" rx="9.8" ry="3.1" fill="#5d7aad" transform="rotate(16 1113.3 588.5)"/><ellipse cx="1136.5" cy="598.9" rx="10.7" ry="5.5" fill="#404870" transform="rotate(5 1136.5 598.9)"/><ellipse cx="1135.5" cy="596.9" rx="6.9" ry="2.5" fill="#535a7e" transform="rotate(5 1135.5 596.9)"/><ellipse cx="1124.4" cy="601.1" rx="11.7" ry="6.0" fill="#4c6ca4" transform="rotate(18 1124.4 601.1)"/><ellipse cx="1123.2" cy="599.0" rx="7.6" ry="2.7" fill="#5d7aad" transform="rotate(18 1123.2 599.0)"/><ellipse cx="1108.9" cy="602.2" rx="14.6" ry="9.8" fill="#6e8ab6" transform="rotate(1 1108.9 602.2)"/><ellipse cx="1107.4" cy="598.8" rx="9.5" ry="4.4" fill="#7c95bd" transform="rotate(1 1107.4 598.8)"/><ellipse cx="1151.3" cy="602.5" rx="11.2" ry="7.0" fill="#404870" transform="rotate(-23 1151.3 602.5)"/><ellipse cx="1150.2" cy="600.0" rx="7.3" ry="3.2" fill="#535a7e" transform="rotate(-23 1150.2 600.0)"/><ellipse cx="1095.4" cy="603.8" rx="13.7" ry="7.9" fill="#4c6ca4" transform="rotate(-11 1095.4 603.8)"/><ellipse cx="1094.0" cy="601.0" rx="8.9" ry="3.5" fill="#5d7aad" transform="rotate(-11 1094.0 601.0)"/><ellipse cx="1141.3" cy="609.4" rx="11.1" ry="8.2" fill="#4c6ca4" transform="rotate(-10 1141.3 609.4)"/><ellipse cx="1140.2" cy="606.5" rx="7.2" ry="3.7" fill="#5d7aad" transform="rotate(-10 1140.2 606.5)"/><ellipse cx="1101.7" cy="609.9" rx="9.8" ry="7.1" fill="#4c6ca4" transform="rotate(-20 1101.7 609.9)"/><ellipse cx="1100.7" cy="607.4" rx="6.4" ry="3.2" fill="#5d7aad" transform="rotate(-20 1100.7 607.4)"/><ellipse cx="1114.7" cy="612.9" rx="14.8" ry="6.3" fill="#5a6a96" transform="rotate(-15 1114.7 612.9)"/><ellipse cx="1113.2" cy="610.7" rx="9.6" ry="2.8" fill="#6a78a0" transform="rotate(-15 1113.2 610.7)"/><ellipse cx="1133.0" cy="615.2" rx="14.9" ry="7.6" fill="#5a7aae" transform="rotate(-9 1133.0 615.2)"/><ellipse cx="1131.5" cy="612.6" rx="9.7" ry="3.4" fill="#6a87b6" transform="rotate(-9 1131.5 612.6)"/><ellipse cx="1153.4" cy="615.3" rx="14.9" ry="9.9" fill="#6e8ab6" transform="rotate(-14 1153.4 615.3)"/><ellipse cx="1151.9" cy="611.8" rx="9.7" ry="4.5" fill="#7c95bd" transform="rotate(-14 1151.9 611.8)"/><ellipse cx="1142.5" cy="617.9" rx="11.0" ry="7.8" fill="#5a6a96" transform="rotate(-8 1142.5 617.9)"/><ellipse cx="1141.4" cy="615.1" rx="7.1" ry="3.5" fill="#6a78a0" transform="rotate(-8 1141.4 615.1)"/><ellipse cx="1111.5" cy="619.1" rx="15.7" ry="8.2" fill="#5a6a96" transform="rotate(8 1111.5 619.1)"/><ellipse cx="1109.9" cy="616.3" rx="10.2" ry="3.7" fill="#6a78a0" transform="rotate(8 1109.9 616.3)"/><ellipse cx="1155.7" cy="621.0" rx="14.1" ry="8.3" fill="#6e8ab6" transform="rotate(-3 1155.7 621.0)"/><ellipse cx="1154.3" cy="618.1" rx="9.1" ry="3.7" fill="#7c95bd" transform="rotate(-3 1154.3 618.1)"/><ellipse cx="1100.6" cy="622.0" rx="15.3" ry="9.2" fill="#404870" transform="rotate(5 1100.6 622.0)"/><ellipse cx="1099.1" cy="618.7" rx="9.9" ry="4.1" fill="#535a7e" transform="rotate(5 1099.1 618.7)"/><ellipse cx="1126.3" cy="625.3" rx="11.1" ry="7.1" fill="#6e8ab6" transform="rotate(-20 1126.3 625.3)"/><ellipse cx="1125.2" cy="622.8" rx="7.2" ry="3.2" fill="#7c95bd" transform="rotate(-20 1125.2 622.8)"/><ellipse cx="1102.6" cy="633.3" rx="18.2" ry="7.7" fill="#6e8ab6" transform="rotate(6 1102.6 633.3)"/><ellipse cx="1100.8" cy="630.6" rx="11.8" ry="3.5" fill="#7c95bd" transform="rotate(6 1100.8 630.6)"/><ellipse cx="1111.8" cy="635.8" rx="12.9" ry="5.9" fill="#5a6a96" transform="rotate(-17 1111.8 635.8)"/><ellipse cx="1110.5" cy="633.7" rx="8.4" ry="2.7" fill="#6a78a0" transform="rotate(-17 1110.5 633.7)"/><ellipse cx="1142.6" cy="636.1" rx="13.5" ry="7.3" fill="#8098c0" transform="rotate(17 1142.6 636.1)"/><ellipse cx="1141.3" cy="633.6" rx="8.7" ry="3.3" fill="#8ca2c6" transform="rotate(17 1141.3 633.6)"/><ellipse cx="1127.5" cy="636.3" rx="16.7" ry="7.5" fill="#5a6a96" transform="rotate(-9 1127.5 636.3)"/><ellipse cx="1125.8" cy="633.7" rx="10.8" ry="3.4" fill="#6a78a0" transform="rotate(-9 1125.8 633.7)"/><ellipse cx="1152.2" cy="637.0" rx="12.4" ry="9.7" fill="#5a6a96" transform="rotate(14 1152.2 637.0)"/><ellipse cx="1151.0" cy="633.6" rx="8.1" ry="4.3" fill="#6a78a0" transform="rotate(14 1151.0 633.6)"/><ellipse cx="1099.8" cy="640.4" rx="20.1" ry="9.5" fill="#5a7aae" transform="rotate(25 1099.8 640.4)"/><ellipse cx="1097.8" cy="637.1" rx="13.1" ry="4.3" fill="#6a87b6" transform="rotate(25 1097.8 637.1)"/><ellipse cx="1125.4" cy="640.8" rx="12.1" ry="6.9" fill="#5a6a96" transform="rotate(-11 1125.4 640.8)"/><ellipse cx="1124.2" cy="638.4" rx="7.8" ry="3.1" fill="#6a78a0" transform="rotate(-11 1124.2 638.4)"/><ellipse cx="1157.9" cy="642.4" rx="10.9" ry="7.5" fill="#5a6a96" transform="rotate(-12 1157.9 642.4)"/><ellipse cx="1156.8" cy="639.7" rx="7.1" ry="3.4" fill="#6a78a0" transform="rotate(-12 1156.8 639.7)"/><ellipse cx="1135.4" cy="645.1" rx="14.3" ry="8.8" fill="#5a6a96" transform="rotate(-11 1135.4 645.1)"/><ellipse cx="1134.0" cy="642.0" rx="9.3" ry="4.0" fill="#6a78a0" transform="rotate(-11 1134.0 642.0)"/><ellipse cx="1114.4" cy="648.0" rx="11.6" ry="6.3" fill="#4c6ca4" transform="rotate(-0 1114.4 648.0)"/><ellipse cx="1113.2" cy="645.8" rx="7.5" ry="2.8" fill="#5d7aad" transform="rotate(-0 1113.2 645.8)"/><ellipse cx="1105.5" cy="508.6" rx="8.0" ry="4.7" fill="#404870" transform="rotate(4 1105.5 508.6)"/><ellipse cx="1104.7" cy="506.9" rx="5.2" ry="2.1" fill="#535a7e" transform="rotate(4 1104.7 506.9)"/><ellipse cx="1130.5" cy="508.6" rx="9.7" ry="4.6" fill="#5a7aae" transform="rotate(-19 1130.5 508.6)"/><ellipse cx="1129.5" cy="507.0" rx="6.3" ry="2.1" fill="#6a87b6" transform="rotate(-19 1129.5 507.0)"/><ellipse cx="1095.8" cy="509.7" rx="11.3" ry="6.6" fill="#5a6a96" transform="rotate(19 1095.8 509.7)"/><ellipse cx="1094.7" cy="507.4" rx="7.4" ry="2.9" fill="#6a78a0" transform="rotate(19 1094.7 507.4)"/><ellipse cx="1160.5" cy="510.3" rx="11.5" ry="5.3" fill="#4c6ca4" transform="rotate(-2 1160.5 510.3)"/><ellipse cx="1159.3" cy="508.4" rx="7.4" ry="2.4" fill="#5d7aad" transform="rotate(-2 1159.3 508.4)"/><ellipse cx="1119.6" cy="510.8" rx="8.6" ry="6.4" fill="#5a6a96" transform="rotate(-1 1119.6 510.8)"/><ellipse cx="1118.7" cy="508.6" rx="5.6" ry="2.9" fill="#6a78a0" transform="rotate(-1 1118.7 508.6)"/><ellipse cx="1078.8" cy="511.4" rx="11.5" ry="5.5" fill="#404870" transform="rotate(5 1078.8 511.4)"/><ellipse cx="1077.7" cy="509.5" rx="7.5" ry="2.5" fill="#535a7e" transform="rotate(5 1077.7 509.5)"/><ellipse cx="1053.9" cy="513.0" rx="10.0" ry="5.8" fill="#5a6a96" transform="rotate(5 1053.9 513.0)"/><ellipse cx="1052.9" cy="511.0" rx="6.5" ry="2.6" fill="#6a78a0" transform="rotate(5 1052.9 511.0)"/><ellipse cx="1062.0" cy="515.7" rx="9.2" ry="6.1" fill="#404870" transform="rotate(-15 1062.0 515.7)"/><ellipse cx="1061.1" cy="513.6" rx="5.9" ry="2.7" fill="#535a7e" transform="rotate(-15 1061.1 513.6)"/><ellipse cx="1149.8" cy="517.7" rx="9.4" ry="3.9" fill="#5a6a96" transform="rotate(-10 1149.8 517.7)"/><ellipse cx="1148.9" cy="516.4" rx="6.1" ry="1.7" fill="#6a78a0" transform="rotate(-10 1148.9 516.4)"/><ellipse cx="1088.8" cy="520.3" rx="7.0" ry="3.9" fill="#5a6a96" transform="rotate(20 1088.8 520.3)"/><ellipse cx="1088.1" cy="518.9" rx="4.5" ry="1.8" fill="#6a78a0" transform="rotate(20 1088.1 518.9)"/><ellipse cx="1039.5" cy="520.4" rx="7.4" ry="4.9" fill="#404870" transform="rotate(-24 1039.5 520.4)"/><ellipse cx="1038.7" cy="518.7" rx="4.8" ry="2.2" fill="#535a7e" transform="rotate(-24 1038.7 518.7)"/><ellipse cx="1155.4" cy="520.9" rx="7.9" ry="5.7" fill="#5a6a96" transform="rotate(-12 1155.4 520.9)"/><ellipse cx="1154.6" cy="518.9" rx="5.1" ry="2.6" fill="#6a78a0" transform="rotate(-12 1154.6 518.9)"/><ellipse cx="1065.9" cy="521.6" rx="9.8" ry="5.0" fill="#404870" transform="rotate(11 1065.9 521.6)"/><ellipse cx="1065.0" cy="519.9" rx="6.4" ry="2.3" fill="#535a7e" transform="rotate(11 1065.0 519.9)"/><ellipse cx="1122.4" cy="521.7" rx="10.0" ry="6.3" fill="#5a7aae" transform="rotate(6 1122.4 521.7)"/><ellipse cx="1121.4" cy="519.5" rx="6.5" ry="2.8" fill="#6a87b6" transform="rotate(6 1121.4 519.5)"/><ellipse cx="1135.2" cy="521.9" rx="7.7" ry="4.7" fill="#4c6ca4" transform="rotate(9 1135.2 521.9)"/><ellipse cx="1134.5" cy="520.2" rx="5.0" ry="2.1" fill="#5d7aad" transform="rotate(9 1134.5 520.2)"/><ellipse cx="1102.0" cy="526.4" rx="9.8" ry="5.6" fill="#404870" transform="rotate(21 1102.0 526.4)"/><ellipse cx="1101.0" cy="524.4" rx="6.4" ry="2.5" fill="#535a7e" transform="rotate(21 1101.0 524.4)"/><ellipse cx="1114.5" cy="527.3" rx="12.0" ry="6.9" fill="#4c6ca4" transform="rotate(6 1114.5 527.3)"/><ellipse cx="1113.3" cy="524.9" rx="7.8" ry="3.1" fill="#5d7aad" transform="rotate(6 1113.3 524.9)"/><ellipse cx="1054.5" cy="528.8" rx="8.7" ry="6.7" fill="#4c6ca4" transform="rotate(-0 1054.5 528.8)"/><ellipse cx="1053.6" cy="526.4" rx="5.7" ry="3.0" fill="#5d7aad" transform="rotate(-0 1053.6 526.4)"/><ellipse cx="1046.9" cy="530.4" rx="11.0" ry="6.4" fill="#5a6a96" transform="rotate(22 1046.9 530.4)"/><ellipse cx="1045.8" cy="528.2" rx="7.2" ry="2.9" fill="#6a78a0" transform="rotate(22 1045.8 528.2)"/><ellipse cx="1141.7" cy="531.5" rx="10.0" ry="6.6" fill="#4c6ca4" transform="rotate(11 1141.7 531.5)"/><ellipse cx="1140.7" cy="529.2" rx="6.5" ry="3.0" fill="#5d7aad" transform="rotate(11 1140.7 529.2)"/><ellipse cx="1158.4" cy="532.7" rx="10.2" ry="7.8" fill="#404870" transform="rotate(2 1158.4 532.7)"/><ellipse cx="1157.4" cy="530.0" rx="6.7" ry="3.5" fill="#535a7e" transform="rotate(2 1157.4 530.0)"/><ellipse cx="1131.5" cy="532.8" rx="13.1" ry="5.8" fill="#5a6a96" transform="rotate(6 1131.5 532.8)"/><ellipse cx="1130.2" cy="530.8" rx="8.5" ry="2.6" fill="#6a78a0" transform="rotate(6 1130.2 530.8)"/><ellipse cx="1113.6" cy="533.1" rx="13.0" ry="7.0" fill="#8098c0" transform="rotate(-22 1113.6 533.1)"/><ellipse cx="1112.3" cy="530.6" rx="8.5" ry="3.2" fill="#8ca2c6" transform="rotate(-22 1112.3 530.6)"/><ellipse cx="1104.9" cy="534.0" rx="11.2" ry="6.4" fill="#54465c" transform="rotate(-8 1104.9 534.0)"/><ellipse cx="1103.8" cy="531.8" rx="7.3" ry="2.9" fill="#65586c" transform="rotate(-8 1103.8 531.8)"/><ellipse cx="1078.8" cy="537.4" rx="11.5" ry="7.0" fill="#404870" transform="rotate(18 1078.8 537.4)"/><ellipse cx="1077.6" cy="535.0" rx="7.5" ry="3.1" fill="#535a7e" transform="rotate(18 1077.6 535.0)"/><ellipse cx="1066.1" cy="538.6" rx="13.2" ry="6.4" fill="#5a6a96" transform="rotate(8 1066.1 538.6)"/><ellipse cx="1064.7" cy="536.3" rx="8.6" ry="2.9" fill="#6a78a0" transform="rotate(8 1064.7 536.3)"/><ellipse cx="1090.9" cy="539.2" rx="8.4" ry="6.9" fill="#4c6ca4" transform="rotate(-0 1090.9 539.2)"/><ellipse cx="1090.1" cy="536.7" rx="5.5" ry="3.1" fill="#5d7aad" transform="rotate(-0 1090.1 536.7)"/><ellipse cx="1139.2" cy="541.5" rx="6.8" ry="5.1" fill="#4c6ca4" transform="rotate(-10 1139.2 541.5)"/><ellipse cx="1138.5" cy="539.7" rx="4.4" ry="2.3" fill="#5d7aad" transform="rotate(-10 1138.5 539.7)"/><ellipse cx="1147.5" cy="543.6" rx="10.4" ry="7.1" fill="#404870" transform="rotate(20 1147.5 543.6)"/><ellipse cx="1146.4" cy="541.1" rx="6.7" ry="3.2" fill="#535a7e" transform="rotate(20 1146.4 541.1)"/><ellipse cx="1121.1" cy="544.3" rx="9.2" ry="5.3" fill="#5a6a96" transform="rotate(-25 1121.1 544.3)"/><ellipse cx="1120.2" cy="542.4" rx="6.0" ry="2.4" fill="#6a78a0" transform="rotate(-25 1120.2 542.4)"/><ellipse cx="1098.1" cy="544.5" rx="7.0" ry="4.4" fill="#54465c" transform="rotate(22 1098.1 544.5)"/><ellipse cx="1097.4" cy="542.9" rx="4.5" ry="2.0" fill="#65586c" transform="rotate(22 1097.4 542.9)"/><ellipse cx="1081.9" cy="544.5" rx="8.3" ry="5.0" fill="#404870" transform="rotate(-1 1081.9 544.5)"/><ellipse cx="1081.1" cy="542.8" rx="5.4" ry="2.2" fill="#535a7e" transform="rotate(-1 1081.1 542.8)"/><ellipse cx="1058.5" cy="546.1" rx="8.2" ry="4.3" fill="#6e8ab6" transform="rotate(14 1058.5 546.1)"/><ellipse cx="1057.7" cy="544.6" rx="5.3" ry="1.9" fill="#7c95bd" transform="rotate(14 1057.7 544.6)"/><ellipse cx="1070.0" cy="548.6" rx="7.8" ry="5.1" fill="#404870" transform="rotate(19 1070.0 548.6)"/><ellipse cx="1069.2" cy="546.8" rx="5.1" ry="2.3" fill="#535a7e" transform="rotate(19 1069.2 546.8)"/><ellipse cx="1113.5" cy="549.7" rx="10.7" ry="4.4" fill="#5a7aae" transform="rotate(-4 1113.5 549.7)"/><ellipse cx="1112.4" cy="548.1" rx="7.0" ry="2.0" fill="#6a87b6" transform="rotate(-4 1112.4 548.1)"/></g><g filter="url(#b1)"><rect x="240" y="610" width="560" height="36" fill="#222838"/><ellipse cx="522.3" cy="600.8" rx="13.1" ry="7.7" fill="#44506e" transform="rotate(16 522.3 600.8)"/><ellipse cx="521.0" cy="598.1" rx="8.5" ry="3.5" fill="#5a657f" transform="rotate(16 521.0 598.1)"/><ellipse cx="337.5" cy="601.6" rx="7.8" ry="6.0" fill="#80a8c8" transform="rotate(-25 337.5 601.6)"/><ellipse cx="336.7" cy="599.5" rx="5.1" ry="2.7" fill="#8fb2ce" transform="rotate(-25 336.7 599.5)"/><ellipse cx="600.5" cy="601.6" rx="13.8" ry="8.6" fill="#54464e" transform="rotate(-6 600.5 601.6)"/><ellipse cx="599.1" cy="598.6" rx="9.0" ry="3.9" fill="#685c63" transform="rotate(-6 599.1 598.6)"/><ellipse cx="504.3" cy="602.0" rx="10.3" ry="5.8" fill="#3a5282" transform="rotate(-11 504.3 602.0)"/><ellipse cx="503.2" cy="599.9" rx="6.7" ry="2.6" fill="#516691" transform="rotate(-11 503.2 599.9)"/><ellipse cx="485.1" cy="602.3" rx="12.4" ry="6.1" fill="#5a80b0" transform="rotate(24 485.1 602.3)"/><ellipse cx="483.8" cy="600.1" rx="8.1" ry="2.7" fill="#6d8fb9" transform="rotate(24 483.8 600.1)"/><ellipse cx="313.1" cy="602.3" rx="11.9" ry="7.1" fill="#54464e" transform="rotate(-6 313.1 602.3)"/><ellipse cx="311.9" cy="599.8" rx="7.7" ry="3.2" fill="#685c63" transform="rotate(-6 311.9 599.8)"/><ellipse cx="569.7" cy="602.9" rx="11.9" ry="5.9" fill="#44506e" transform="rotate(-15 569.7 602.9)"/><ellipse cx="568.5" cy="600.8" rx="7.8" ry="2.7" fill="#5a657f" transform="rotate(-15 568.5 600.8)"/><ellipse cx="698.0" cy="603.2" rx="10.0" ry="5.6" fill="#5a6680" transform="rotate(-18 698.0 603.2)"/><ellipse cx="697.0" cy="601.2" rx="6.5" ry="2.5" fill="#6d788f" transform="rotate(-18 697.0 601.2)"/><ellipse cx="434.7" cy="603.2" rx="12.1" ry="7.3" fill="#4a6a98" transform="rotate(-9 434.7 603.2)"/><ellipse cx="433.4" cy="600.7" rx="7.8" ry="3.3" fill="#5f7ba4" transform="rotate(-9 433.4 600.7)"/><ellipse cx="237.2" cy="603.4" rx="12.9" ry="8.8" fill="#5a6680" transform="rotate(10 237.2 603.4)"/><ellipse cx="236.0" cy="600.4" rx="8.4" ry="4.0" fill="#6d788f" transform="rotate(10 236.0 600.4)"/><ellipse cx="277.2" cy="603.9" rx="9.4" ry="5.0" fill="#5a80b0" transform="rotate(-8 277.2 603.9)"/><ellipse cx="276.3" cy="602.2" rx="6.1" ry="2.2" fill="#6d8fb9" transform="rotate(-8 276.3 602.2)"/><ellipse cx="373.4" cy="604.0" rx="10.3" ry="5.6" fill="#5a80b0" transform="rotate(-12 373.4 604.0)"/><ellipse cx="372.4" cy="602.0" rx="6.7" ry="2.5" fill="#6d8fb9" transform="rotate(-12 372.4 602.0)"/><ellipse cx="550.7" cy="604.0" rx="8.0" ry="5.4" fill="#4a6a98" transform="rotate(1 550.7 604.0)"/><ellipse cx="549.9" cy="602.1" rx="5.2" ry="2.4" fill="#5f7ba4" transform="rotate(1 549.9 602.1)"/><ellipse cx="532.8" cy="604.3" rx="11.1" ry="5.3" fill="#80a8c8" transform="rotate(22 532.8 604.3)"/><ellipse cx="531.7" cy="602.4" rx="7.2" ry="2.4" fill="#8fb2ce" transform="rotate(22 531.7 602.4)"/><ellipse cx="410.0" cy="605.2" rx="11.9" ry="8.9" fill="#3a5282" transform="rotate(19 410.0 605.2)"/><ellipse cx="408.8" cy="602.1" rx="7.8" ry="4.0" fill="#516691" transform="rotate(19 408.8 602.1)"/><ellipse cx="675.8" cy="605.2" rx="11.3" ry="5.9" fill="#54464e" transform="rotate(-7 675.8 605.2)"/><ellipse cx="674.7" cy="603.2" rx="7.3" ry="2.6" fill="#685c63" transform="rotate(-7 674.7 603.2)"/><ellipse cx="737.2" cy="605.4" rx="14.3" ry="7.5" fill="#4a6a98" transform="rotate(-12 737.2 605.4)"/><ellipse cx="735.7" cy="602.8" rx="9.3" ry="3.4" fill="#5f7ba4" transform="rotate(-12 735.7 602.8)"/><ellipse cx="381.8" cy="605.7" rx="10.3" ry="6.5" fill="#4a6a98" transform="rotate(-2 381.8 605.7)"/><ellipse cx="380.8" cy="603.5" rx="6.7" ry="2.9" fill="#5f7ba4" transform="rotate(-2 380.8 603.5)"/><ellipse cx="797.8" cy="605.8" rx="15.6" ry="8.2" fill="#54464e" transform="rotate(5 797.8 605.8)"/><ellipse cx="796.2" cy="603.0" rx="10.1" ry="3.7" fill="#685c63" transform="rotate(5 796.2 603.0)"/><ellipse cx="576.6" cy="605.8" rx="15.3" ry="7.9" fill="#3a5282" transform="rotate(22 576.6 605.8)"/><ellipse cx="575.0" cy="603.1" rx="10.0" ry="3.5" fill="#516691" transform="rotate(22 575.0 603.1)"/><ellipse cx="353.0" cy="606.2" rx="12.0" ry="6.2" fill="#44506e" transform="rotate(-1 353.0 606.2)"/><ellipse cx="351.8" cy="604.0" rx="7.8" ry="2.8" fill="#5a657f" transform="rotate(-1 351.8 604.0)"/><ellipse cx="473.5" cy="606.2" rx="16.2" ry="9.1" fill="#5a6680" transform="rotate(-23 473.5 606.2)"/><ellipse cx="471.9" cy="603.0" rx="10.5" ry="4.1" fill="#6d788f" transform="rotate(-23 471.9 603.0)"/><ellipse cx="714.4" cy="606.2" rx="8.5" ry="5.9" fill="#44506e" transform="rotate(-12 714.4 606.2)"/><ellipse cx="713.5" cy="604.2" rx="5.5" ry="2.6" fill="#5a657f" transform="rotate(-12 713.5 604.2)"/><ellipse cx="321.0" cy="606.6" rx="8.3" ry="4.7" fill="#4a6a98" transform="rotate(12 321.0 606.6)"/><ellipse cx="320.2" cy="604.9" rx="5.4" ry="2.1" fill="#5f7ba4" transform="rotate(12 320.2 604.9)"/><ellipse cx="609.3" cy="606.8" rx="8.4" ry="5.9" fill="#4a6a98" transform="rotate(17 609.3 606.8)"/><ellipse cx="608.5" cy="604.8" rx="5.5" ry="2.6" fill="#5f7ba4" transform="rotate(17 608.5 604.8)"/><ellipse cx="684.3" cy="607.0" rx="13.8" ry="7.5" fill="#54464e" transform="rotate(-12 684.3 607.0)"/><ellipse cx="682.9" cy="604.4" rx="9.0" ry="3.4" fill="#685c63" transform="rotate(-12 682.9 604.4)"/><ellipse cx="444.8" cy="607.3" rx="10.3" ry="6.1" fill="#5a6680" transform="rotate(-3 444.8 607.3)"/><ellipse cx="443.8" cy="605.2" rx="6.7" ry="2.7" fill="#6d788f" transform="rotate(-3 443.8 605.2)"/><ellipse cx="652.3" cy="607.7" rx="13.4" ry="6.3" fill="#5a80b0" transform="rotate(4 652.3 607.7)"/><ellipse cx="650.9" cy="605.5" rx="8.7" ry="2.8" fill="#6d8fb9" transform="rotate(4 650.9 605.5)"/><ellipse cx="461.6" cy="607.8" rx="11.3" ry="6.7" fill="#6a92bc" transform="rotate(-2 461.6 607.8)"/><ellipse cx="460.4" cy="605.5" rx="7.4" ry="3.0" fill="#7b9fc4" transform="rotate(-2 460.4 605.5)"/><ellipse cx="621.9" cy="608.3" rx="12.7" ry="6.5" fill="#5a80b0" transform="rotate(-8 621.9 608.3)"/><ellipse cx="620.6" cy="606.0" rx="8.3" ry="2.9" fill="#6d8fb9" transform="rotate(-8 620.6 606.0)"/><ellipse cx="249.7" cy="608.3" rx="9.8" ry="6.3" fill="#4a6a98" transform="rotate(8 249.7 608.3)"/><ellipse cx="248.8" cy="606.1" rx="6.3" ry="2.8" fill="#5f7ba4" transform="rotate(8 248.8 606.1)"/><ellipse cx="396.3" cy="608.9" rx="15.2" ry="7.8" fill="#6a92bc" transform="rotate(3 396.3 608.9)"/><ellipse cx="394.8" cy="606.2" rx="9.9" ry="3.5" fill="#7b9fc4" transform="rotate(3 394.8 606.2)"/><ellipse cx="759.4" cy="609.0" rx="10.0" ry="6.8" fill="#3a5282" transform="rotate(-15 759.4 609.0)"/><ellipse cx="758.4" cy="606.6" rx="6.5" ry="3.1" fill="#516691" transform="rotate(-15 758.4 606.6)"/><ellipse cx="257.2" cy="609.3" rx="12.4" ry="6.7" fill="#6a92bc" transform="rotate(-13 257.2 609.3)"/><ellipse cx="255.9" cy="607.0" rx="8.1" ry="3.0" fill="#7b9fc4" transform="rotate(-13 255.9 607.0)"/><ellipse cx="646.5" cy="610.1" rx="12.2" ry="6.4" fill="#3a5282" transform="rotate(-5 646.5 610.1)"/><ellipse cx="645.3" cy="607.9" rx="7.9" ry="2.9" fill="#516691" transform="rotate(-5 645.3 607.9)"/><ellipse cx="748.0" cy="610.3" rx="13.7" ry="6.6" fill="#3a5282" transform="rotate(3 748.0 610.3)"/><ellipse cx="746.7" cy="608.0" rx="8.9" ry="3.0" fill="#516691" transform="rotate(3 746.7 608.0)"/><ellipse cx="297.1" cy="610.3" rx="10.8" ry="6.4" fill="#5a6680" transform="rotate(-18 297.1 610.3)"/><ellipse cx="296.0" cy="608.1" rx="7.1" ry="2.9" fill="#6d788f" transform="rotate(-18 296.0 608.1)"/><ellipse cx="782.4" cy="610.8" rx="11.0" ry="7.0" fill="#3a5282" transform="rotate(-13 782.4 610.8)"/><ellipse cx="781.3" cy="608.3" rx="7.1" ry="3.2" fill="#516691" transform="rotate(-13 781.3 608.3)"/><ellipse cx="422.7" cy="613.2" rx="11.4" ry="4.7" fill="#4a6a98" transform="rotate(12 422.7 613.2)"/><ellipse cx="421.6" cy="611.5" rx="7.4" ry="2.1" fill="#5f7ba4" transform="rotate(12 421.6 611.5)"/><ellipse cx="600.4" cy="613.3" rx="9.3" ry="6.7" fill="#5a6680" transform="rotate(-15 600.4 613.3)"/><ellipse cx="599.4" cy="611.0" rx="6.1" ry="3.0" fill="#6d788f" transform="rotate(-15 599.4 611.0)"/><ellipse cx="279.7" cy="613.6" rx="11.8" ry="8.3" fill="#44506e" transform="rotate(20 279.7 613.6)"/><ellipse cx="278.5" cy="610.7" rx="7.7" ry="3.8" fill="#5a657f" transform="rotate(20 278.5 610.7)"/><ellipse cx="430.6" cy="613.8" rx="10.3" ry="6.9" fill="#54464e" transform="rotate(-17 430.6 613.8)"/><ellipse cx="429.6" cy="611.4" rx="6.7" ry="3.1" fill="#685c63" transform="rotate(-17 429.6 611.4)"/><ellipse cx="504.8" cy="614.0" rx="11.0" ry="6.1" fill="#44506e" transform="rotate(-22 504.8 614.0)"/><ellipse cx="503.7" cy="611.9" rx="7.1" ry="2.7" fill="#5a657f" transform="rotate(-22 503.7 611.9)"/><ellipse cx="762.7" cy="614.5" rx="14.7" ry="7.8" fill="#54464e" transform="rotate(-3 762.7 614.5)"/><ellipse cx="761.2" cy="611.8" rx="9.5" ry="3.5" fill="#685c63" transform="rotate(-3 761.2 611.8)"/><ellipse cx="339.8" cy="614.6" rx="13.9" ry="6.9" fill="#4a6a98" transform="rotate(-18 339.8 614.6)"/><ellipse cx="338.4" cy="612.2" rx="9.1" ry="3.1" fill="#5f7ba4" transform="rotate(-18 338.4 612.2)"/><ellipse cx="751.7" cy="614.9" rx="14.6" ry="9.0" fill="#4a6a98" transform="rotate(-20 751.7 614.9)"/><ellipse cx="750.2" cy="611.7" rx="9.5" ry="4.1" fill="#5f7ba4" transform="rotate(-20 750.2 611.7)"/><ellipse cx="491.6" cy="614.9" rx="11.8" ry="7.0" fill="#5a80b0" transform="rotate(13 491.6 614.9)"/><ellipse cx="490.4" cy="612.5" rx="7.7" ry="3.1" fill="#6d8fb9" transform="rotate(13 490.4 612.5)"/><ellipse cx="617.5" cy="615.2" rx="13.8" ry="7.2" fill="#3a5282" transform="rotate(-5 617.5 615.2)"/><ellipse cx="616.1" cy="612.7" rx="9.0" ry="3.2" fill="#516691" transform="rotate(-5 616.1 612.7)"/><ellipse cx="793.1" cy="615.5" rx="10.3" ry="6.4" fill="#5a6680" transform="rotate(15 793.1 615.5)"/><ellipse cx="792.1" cy="613.3" rx="6.7" ry="2.9" fill="#6d788f" transform="rotate(15 792.1 613.3)"/><ellipse cx="372.2" cy="615.7" rx="10.1" ry="6.1" fill="#6a92bc" transform="rotate(19 372.2 615.7)"/><ellipse cx="371.2" cy="613.5" rx="6.5" ry="2.7" fill="#7b9fc4" transform="rotate(19 371.2 613.5)"/><ellipse cx="558.3" cy="615.8" rx="11.1" ry="8.1" fill="#6a92bc" transform="rotate(-2 558.3 615.8)"/><ellipse cx="557.1" cy="612.9" rx="7.2" ry="3.7" fill="#7b9fc4" transform="rotate(-2 557.1 612.9)"/><ellipse cx="647.5" cy="616.0" rx="13.1" ry="7.0" fill="#80a8c8" transform="rotate(-13 647.5 616.0)"/><ellipse cx="646.2" cy="613.6" rx="8.5" ry="3.1" fill="#8fb2ce" transform="rotate(-13 646.2 613.6)"/><ellipse cx="325.9" cy="616.5" rx="12.2" ry="6.6" fill="#66624c" transform="rotate(4 325.9 616.5)"/><ellipse cx="324.7" cy="614.2" rx="7.9" ry="3.0" fill="#787461" transform="rotate(4 324.7 614.2)"/><ellipse cx="539.2" cy="616.5" rx="11.4" ry="5.7" fill="#44506e" transform="rotate(24 539.2 616.5)"/><ellipse cx="538.0" cy="614.5" rx="7.4" ry="2.6" fill="#5a657f" transform="rotate(24 538.0 614.5)"/><ellipse cx="629.0" cy="616.6" rx="10.6" ry="6.1" fill="#5a80b0" transform="rotate(2 629.0 616.6)"/><ellipse cx="628.0" cy="614.5" rx="6.9" ry="2.8" fill="#6d8fb9" transform="rotate(2 628.0 614.5)"/><ellipse cx="566.9" cy="618.1" rx="14.7" ry="7.2" fill="#44506e" transform="rotate(6 566.9 618.1)"/><ellipse cx="565.5" cy="615.5" rx="9.5" ry="3.3" fill="#5a657f" transform="rotate(6 565.5 615.5)"/><ellipse cx="661.4" cy="618.2" rx="11.3" ry="5.9" fill="#66624c" transform="rotate(-6 661.4 618.2)"/><ellipse cx="660.3" cy="616.1" rx="7.4" ry="2.6" fill="#787461" transform="rotate(-6 660.3 616.1)"/><ellipse cx="356.6" cy="618.3" rx="11.8" ry="6.6" fill="#6a92bc" transform="rotate(-19 356.6 618.3)"/><ellipse cx="355.4" cy="616.0" rx="7.7" ry="3.0" fill="#7b9fc4" transform="rotate(-19 355.4 616.0)"/><ellipse cx="463.9" cy="619.4" rx="15.7" ry="7.4" fill="#5a80b0" transform="rotate(19 463.9 619.4)"/><ellipse cx="462.4" cy="616.8" rx="10.2" ry="3.3" fill="#6d8fb9" transform="rotate(19 462.4 616.8)"/><ellipse cx="723.2" cy="619.4" rx="11.7" ry="7.0" fill="#3a5282" transform="rotate(-18 723.2 619.4)"/><ellipse cx="722.0" cy="617.0" rx="7.6" ry="3.2" fill="#516691" transform="rotate(-18 722.0 617.0)"/><ellipse cx="301.6" cy="619.8" rx="9.4" ry="4.9" fill="#4a6a98" transform="rotate(5 301.6 619.8)"/><ellipse cx="300.6" cy="618.1" rx="6.1" ry="2.2" fill="#5f7ba4" transform="rotate(5 300.6 618.1)"/><ellipse cx="676.4" cy="620.1" rx="12.0" ry="6.9" fill="#44506e" transform="rotate(-11 676.4 620.1)"/><ellipse cx="675.2" cy="617.6" rx="7.8" ry="3.1" fill="#5a657f" transform="rotate(-11 675.2 617.6)"/><ellipse cx="307.5" cy="620.1" rx="11.7" ry="8.2" fill="#3a5282" transform="rotate(10 307.5 620.1)"/><ellipse cx="306.3" cy="617.2" rx="7.6" ry="3.7" fill="#516691" transform="rotate(10 306.3 617.2)"/><ellipse cx="781.1" cy="620.1" rx="13.5" ry="7.9" fill="#6a92bc" transform="rotate(-17 781.1 620.1)"/><ellipse cx="779.8" cy="617.4" rx="8.8" ry="3.5" fill="#7b9fc4" transform="rotate(-17 779.8 617.4)"/><ellipse cx="478.6" cy="620.5" rx="12.5" ry="5.2" fill="#5a80b0" transform="rotate(-10 478.6 620.5)"/><ellipse cx="477.4" cy="618.7" rx="8.1" ry="2.3" fill="#6d8fb9" transform="rotate(-10 477.4 618.7)"/><ellipse cx="451.7" cy="620.7" rx="12.6" ry="5.6" fill="#4a6a98" transform="rotate(-24 451.7 620.7)"/><ellipse cx="450.4" cy="618.7" rx="8.2" ry="2.5" fill="#5f7ba4" transform="rotate(-24 450.4 618.7)"/><ellipse cx="408.1" cy="620.8" rx="11.4" ry="6.0" fill="#44506e" transform="rotate(1 408.1 620.8)"/><ellipse cx="406.9" cy="618.7" rx="7.4" ry="2.7" fill="#5a657f" transform="rotate(1 406.9 618.7)"/><ellipse cx="739.7" cy="621.2" rx="10.2" ry="5.2" fill="#5a6680" transform="rotate(12 739.7 621.2)"/><ellipse cx="738.7" cy="619.4" rx="6.6" ry="2.3" fill="#6d788f" transform="rotate(12 738.7 619.4)"/><ellipse cx="711.6" cy="621.2" rx="8.1" ry="5.9" fill="#3a5282" transform="rotate(12 711.6 621.2)"/><ellipse cx="710.8" cy="619.2" rx="5.3" ry="2.6" fill="#516691" transform="rotate(12 710.8 619.2)"/><ellipse cx="590.2" cy="622.2" rx="10.7" ry="8.1" fill="#5a80b0" transform="rotate(-18 590.2 622.2)"/><ellipse cx="589.1" cy="619.4" rx="7.0" ry="3.6" fill="#6d8fb9" transform="rotate(-18 589.1 619.4)"/><ellipse cx="255.3" cy="622.7" rx="14.1" ry="6.7" fill="#6a92bc" transform="rotate(12 255.3 622.7)"/><ellipse cx="253.9" cy="620.3" rx="9.1" ry="3.0" fill="#7b9fc4" transform="rotate(12 253.9 620.3)"/><ellipse cx="269.3" cy="622.8" rx="10.0" ry="6.9" fill="#4a6a98" transform="rotate(22 269.3 622.8)"/><ellipse cx="268.3" cy="620.3" rx="6.5" ry="3.1" fill="#5f7ba4" transform="rotate(22 268.3 620.3)"/><ellipse cx="691.2" cy="622.9" rx="15.8" ry="7.0" fill="#5a80b0" transform="rotate(-3 691.2 622.9)"/><ellipse cx="689.6" cy="620.4" rx="10.3" ry="3.1" fill="#6d8fb9" transform="rotate(-3 689.6 620.4)"/><ellipse cx="389.3" cy="622.9" rx="11.2" ry="5.7" fill="#80a8c8" transform="rotate(-0 389.3 622.9)"/><ellipse cx="388.2" cy="620.9" rx="7.3" ry="2.6" fill="#8fb2ce" transform="rotate(-0 388.2 620.9)"/><ellipse cx="529.7" cy="622.9" rx="13.3" ry="5.7" fill="#5a80b0" transform="rotate(18 529.7 622.9)"/><ellipse cx="528.4" cy="621.0" rx="8.6" ry="2.6" fill="#6d8fb9" transform="rotate(18 528.4 621.0)"/><ellipse cx="234.6" cy="623.2" rx="13.0" ry="7.9" fill="#54464e" transform="rotate(6 234.6 623.2)"/><ellipse cx="233.3" cy="620.5" rx="8.5" ry="3.6" fill="#685c63" transform="rotate(6 233.3 620.5)"/><ellipse cx="460.9" cy="626.1" rx="12.7" ry="6.6" fill="#6a92bc" transform="rotate(21 460.9 626.1)"/><ellipse cx="459.6" cy="623.8" rx="8.2" ry="2.9" fill="#7b9fc4" transform="rotate(21 459.6 623.8)"/><ellipse cx="607.9" cy="626.2" rx="9.3" ry="6.9" fill="#5a6680" transform="rotate(6 607.9 626.2)"/><ellipse cx="607.0" cy="623.8" rx="6.0" ry="3.1" fill="#6d788f" transform="rotate(6 607.0 623.8)"/><ellipse cx="645.5" cy="626.3" rx="11.0" ry="6.8" fill="#44506e" transform="rotate(-1 645.5 626.3)"/><ellipse cx="644.4" cy="624.0" rx="7.2" ry="3.1" fill="#5a657f" transform="rotate(-1 644.4 624.0)"/><ellipse cx="293.9" cy="626.9" rx="15.3" ry="8.4" fill="#54464e" transform="rotate(11 293.9 626.9)"/><ellipse cx="292.4" cy="624.0" rx="10.0" ry="3.8" fill="#685c63" transform="rotate(11 292.4 624.0)"/><ellipse cx="283.1" cy="627.3" rx="9.7" ry="5.2" fill="#5a80b0" transform="rotate(23 283.1 627.3)"/><ellipse cx="282.1" cy="625.5" rx="6.3" ry="2.3" fill="#6d8fb9" transform="rotate(23 282.1 625.5)"/><ellipse cx="766.1" cy="627.4" rx="11.2" ry="6.4" fill="#6a92bc" transform="rotate(-24 766.1 627.4)"/><ellipse cx="764.9" cy="625.2" rx="7.2" ry="2.9" fill="#7b9fc4" transform="rotate(-24 764.9 625.2)"/><ellipse cx="440.3" cy="627.8" rx="10.2" ry="6.0" fill="#6a92bc" transform="rotate(5 440.3 627.8)"/><ellipse cx="439.3" cy="625.7" rx="6.6" ry="2.7" fill="#7b9fc4" transform="rotate(5 439.3 625.7)"/><ellipse cx="712.8" cy="627.9" rx="10.2" ry="6.1" fill="#66624c" transform="rotate(3 712.8 627.9)"/><ellipse cx="711.8" cy="625.7" rx="6.6" ry="2.7" fill="#787461" transform="rotate(3 711.8 625.7)"/><ellipse cx="791.1" cy="628.2" rx="9.3" ry="6.2" fill="#6a92bc" transform="rotate(-21 791.1 628.2)"/><ellipse cx="790.2" cy="626.0" rx="6.0" ry="2.8" fill="#7b9fc4" transform="rotate(-21 790.2 626.0)"/><ellipse cx="381.6" cy="628.4" rx="10.8" ry="5.6" fill="#44506e" transform="rotate(9 381.6 628.4)"/><ellipse cx="380.6" cy="626.4" rx="7.0" ry="2.5" fill="#5a657f" transform="rotate(9 380.6 626.4)"/><ellipse cx="404.4" cy="628.5" rx="13.8" ry="7.4" fill="#6a92bc" transform="rotate(24 404.4 628.5)"/><ellipse cx="403.0" cy="625.9" rx="9.0" ry="3.3" fill="#7b9fc4" transform="rotate(24 403.0 625.9)"/><ellipse cx="538.7" cy="628.9" rx="11.6" ry="8.7" fill="#44506e" transform="rotate(-8 538.7 628.9)"/><ellipse cx="537.5" cy="625.9" rx="7.6" ry="3.9" fill="#5a657f" transform="rotate(-8 537.5 625.9)"/><ellipse cx="668.6" cy="629.1" rx="11.1" ry="7.7" fill="#44506e" transform="rotate(4 668.6 629.1)"/><ellipse cx="667.5" cy="626.4" rx="7.2" ry="3.5" fill="#5a657f" transform="rotate(4 667.5 626.4)"/><ellipse cx="520.4" cy="629.5" rx="10.5" ry="6.1" fill="#54464e" transform="rotate(-10 520.4 629.5)"/><ellipse cx="519.4" cy="627.3" rx="6.8" ry="2.7" fill="#685c63" transform="rotate(-10 519.4 627.3)"/><ellipse cx="779.6" cy="629.6" rx="10.5" ry="7.3" fill="#6a92bc" transform="rotate(-1 779.6 629.6)"/><ellipse cx="778.6" cy="627.0" rx="6.8" ry="3.3" fill="#7b9fc4" transform="rotate(-1 778.6 627.0)"/><ellipse cx="249.4" cy="629.6" rx="8.4" ry="5.8" fill="#5a80b0" transform="rotate(-16 249.4 629.6)"/><ellipse cx="248.5" cy="627.6" rx="5.5" ry="2.6" fill="#6d8fb9" transform="rotate(-16 248.5 627.6)"/><ellipse cx="431.3" cy="630.9" rx="8.8" ry="5.0" fill="#5a6680" transform="rotate(-22 431.3 630.9)"/><ellipse cx="430.4" cy="629.2" rx="5.7" ry="2.3" fill="#6d788f" transform="rotate(-22 430.4 629.2)"/><ellipse cx="547.1" cy="631.1" rx="12.8" ry="6.7" fill="#3a5282" transform="rotate(0 547.1 631.1)"/><ellipse cx="545.8" cy="628.8" rx="8.3" ry="3.0" fill="#516691" transform="rotate(0 545.8 628.8)"/><ellipse cx="753.6" cy="631.2" rx="9.2" ry="4.3" fill="#5a80b0" transform="rotate(11 753.6 631.2)"/><ellipse cx="752.7" cy="629.7" rx="6.0" ry="2.0" fill="#6d8fb9" transform="rotate(11 752.7 629.7)"/><ellipse cx="597.4" cy="631.2" rx="11.3" ry="7.3" fill="#5a6680" transform="rotate(-9 597.4 631.2)"/><ellipse cx="596.3" cy="628.7" rx="7.3" ry="3.3" fill="#6d788f" transform="rotate(-9 596.3 628.7)"/><ellipse cx="736.3" cy="631.2" rx="8.4" ry="6.1" fill="#6a92bc" transform="rotate(8 736.3 631.2)"/><ellipse cx="735.5" cy="629.1" rx="5.5" ry="2.7" fill="#7b9fc4" transform="rotate(8 735.5 629.1)"/><ellipse cx="480.3" cy="631.3" rx="14.1" ry="7.0" fill="#3a5282" transform="rotate(-9 480.3 631.3)"/><ellipse cx="478.9" cy="628.9" rx="9.2" ry="3.1" fill="#516691" transform="rotate(-9 478.9 628.9)"/><ellipse cx="371.5" cy="631.5" rx="11.7" ry="7.5" fill="#54464e" transform="rotate(0 371.5 631.5)"/><ellipse cx="370.3" cy="628.9" rx="7.6" ry="3.4" fill="#685c63" transform="rotate(0 370.3 628.9)"/><ellipse cx="494.1" cy="631.6" rx="12.8" ry="6.6" fill="#44506e" transform="rotate(-11 494.1 631.6)"/><ellipse cx="492.9" cy="629.2" rx="8.3" ry="3.0" fill="#5a657f" transform="rotate(-11 492.9 629.2)"/><ellipse cx="306.0" cy="631.8" rx="9.4" ry="5.7" fill="#4a6a98" transform="rotate(-7 306.0 631.8)"/><ellipse cx="305.0" cy="629.8" rx="6.1" ry="2.5" fill="#5f7ba4" transform="rotate(-7 305.0 629.8)"/><ellipse cx="414.2" cy="632.0" rx="13.6" ry="7.5" fill="#3a5282" transform="rotate(10 414.2 632.0)"/><ellipse cx="412.8" cy="629.3" rx="8.8" ry="3.4" fill="#516691" transform="rotate(10 412.8 629.3)"/><ellipse cx="705.0" cy="632.1" rx="10.8" ry="6.7" fill="#5a80b0" transform="rotate(9 705.0 632.1)"/><ellipse cx="703.9" cy="629.7" rx="7.0" ry="3.0" fill="#6d8fb9" transform="rotate(9 703.9 629.7)"/><ellipse cx="230.8" cy="632.1" rx="11.8" ry="6.0" fill="#44506e" transform="rotate(-15 230.8 632.1)"/><ellipse cx="229.7" cy="630.0" rx="7.6" ry="2.7" fill="#5a657f" transform="rotate(-15 229.7 630.0)"/><ellipse cx="334.8" cy="632.5" rx="11.1" ry="5.4" fill="#4a6a98" transform="rotate(-2 334.8 632.5)"/><ellipse cx="333.6" cy="630.6" rx="7.2" ry="2.4" fill="#5f7ba4" transform="rotate(-2 333.6 630.6)"/><ellipse cx="625.4" cy="632.7" rx="14.1" ry="8.2" fill="#66624c" transform="rotate(23 625.4 632.7)"/><ellipse cx="624.0" cy="629.9" rx="9.2" ry="3.7" fill="#787461" transform="rotate(23 624.0 629.9)"/><ellipse cx="660.2" cy="632.9" rx="8.4" ry="4.9" fill="#66624c" transform="rotate(-16 660.2 632.9)"/><ellipse cx="659.3" cy="631.2" rx="5.4" ry="2.2" fill="#787461" transform="rotate(-16 659.3 631.2)"/><ellipse cx="582.0" cy="632.9" rx="8.8" ry="6.8" fill="#5a80b0" transform="rotate(-13 582.0 632.9)"/><ellipse cx="581.1" cy="630.5" rx="5.7" ry="3.1" fill="#6d8fb9" transform="rotate(-13 581.1 630.5)"/><ellipse cx="684.7" cy="633.0" rx="12.7" ry="5.7" fill="#44506e" transform="rotate(1 684.7 633.0)"/><ellipse cx="683.4" cy="631.0" rx="8.2" ry="2.6" fill="#5a657f" transform="rotate(1 683.4 631.0)"/><ellipse cx="351.5" cy="633.8" rx="11.6" ry="7.4" fill="#66624c" transform="rotate(18 351.5 633.8)"/><ellipse cx="350.4" cy="631.2" rx="7.5" ry="3.3" fill="#787461" transform="rotate(18 350.4 631.2)"/><ellipse cx="324.6" cy="634.4" rx="8.5" ry="6.0" fill="#4a6a98" transform="rotate(7 324.6 634.4)"/><ellipse cx="323.7" cy="632.3" rx="5.5" ry="2.7" fill="#5f7ba4" transform="rotate(7 323.7 632.3)"/><ellipse cx="264.8" cy="634.6" rx="12.2" ry="7.2" fill="#54464e" transform="rotate(10 264.8 634.6)"/><ellipse cx="263.6" cy="632.1" rx="8.0" ry="3.2" fill="#685c63" transform="rotate(10 263.6 632.1)"/><ellipse cx="566.6" cy="635.1" rx="11.4" ry="6.3" fill="#5a80b0" transform="rotate(18 566.6 635.1)"/><ellipse cx="565.4" cy="632.9" rx="7.4" ry="2.8" fill="#6d8fb9" transform="rotate(18 565.4 632.9)"/><ellipse cx="505.5" cy="635.5" rx="11.3" ry="5.8" fill="#66624c" transform="rotate(-1 505.5 635.5)"/><ellipse cx="504.4" cy="633.4" rx="7.3" ry="2.6" fill="#787461" transform="rotate(-1 504.4 633.4)"/><ellipse cx="739.9" cy="637.1" rx="14.2" ry="7.3" fill="#44506e" transform="rotate(-2 739.9 637.1)"/><ellipse cx="738.5" cy="634.6" rx="9.2" ry="3.3" fill="#5a657f" transform="rotate(-2 738.5 634.6)"/><ellipse cx="312.7" cy="637.5" rx="11.1" ry="6.6" fill="#4a6a98" transform="rotate(-23 312.7 637.5)"/><ellipse cx="311.6" cy="635.2" rx="7.2" ry="3.0" fill="#5f7ba4" transform="rotate(-23 311.6 635.2)"/><ellipse cx="772.2" cy="637.9" rx="9.2" ry="6.3" fill="#6a92bc" transform="rotate(-13 772.2 637.9)"/><ellipse cx="771.3" cy="635.7" rx="6.0" ry="2.8" fill="#7b9fc4" transform="rotate(-13 771.3 635.7)"/><ellipse cx="707.7" cy="638.7" rx="13.0" ry="8.4" fill="#5a80b0" transform="rotate(-6 707.7 638.7)"/><ellipse cx="706.4" cy="635.8" rx="8.5" ry="3.8" fill="#6d8fb9" transform="rotate(-6 706.4 635.8)"/><ellipse cx="563.9" cy="639.1" rx="13.1" ry="6.7" fill="#5a80b0" transform="rotate(-6 563.9 639.1)"/><ellipse cx="562.6" cy="636.8" rx="8.5" ry="3.0" fill="#6d8fb9" transform="rotate(-6 562.6 636.8)"/><ellipse cx="624.1" cy="639.2" rx="13.8" ry="7.1" fill="#80a8c8" transform="rotate(17 624.1 639.2)"/><ellipse cx="622.7" cy="636.7" rx="8.9" ry="3.2" fill="#8fb2ce" transform="rotate(17 622.7 636.7)"/><ellipse cx="681.7" cy="639.5" rx="10.9" ry="7.0" fill="#54464e" transform="rotate(-5 681.7 639.5)"/><ellipse cx="680.6" cy="637.0" rx="7.1" ry="3.2" fill="#685c63" transform="rotate(-5 680.6 637.0)"/><ellipse cx="756.3" cy="639.9" rx="10.6" ry="5.2" fill="#5a80b0" transform="rotate(-12 756.3 639.9)"/><ellipse cx="755.3" cy="638.0" rx="6.9" ry="2.3" fill="#6d8fb9" transform="rotate(-12 755.3 638.0)"/><ellipse cx="652.6" cy="639.9" rx="12.9" ry="8.1" fill="#44506e" transform="rotate(-1 652.6 639.9)"/><ellipse cx="651.3" cy="637.1" rx="8.4" ry="3.7" fill="#5a657f" transform="rotate(-1 651.3 637.1)"/><ellipse cx="586.7" cy="640.8" rx="11.3" ry="7.9" fill="#5a6680" transform="rotate(-8 586.7 640.8)"/><ellipse cx="585.6" cy="638.0" rx="7.3" ry="3.5" fill="#6d788f" transform="rotate(-8 585.6 638.0)"/><ellipse cx="379.6" cy="640.8" rx="8.0" ry="4.6" fill="#54464e" transform="rotate(-4 379.6 640.8)"/><ellipse cx="378.8" cy="639.2" rx="5.2" ry="2.1" fill="#685c63" transform="rotate(-4 378.8 639.2)"/><ellipse cx="333.4" cy="640.9" rx="14.6" ry="6.2" fill="#5a80b0" transform="rotate(-12 333.4 640.9)"/><ellipse cx="331.9" cy="638.7" rx="9.5" ry="2.8" fill="#6d8fb9" transform="rotate(-12 331.9 638.7)"/><ellipse cx="609.7" cy="641.0" rx="8.2" ry="5.3" fill="#6a92bc" transform="rotate(-2 609.7 641.0)"/><ellipse cx="608.9" cy="639.2" rx="5.3" ry="2.4" fill="#7b9fc4" transform="rotate(-2 608.9 639.2)"/><ellipse cx="509.6" cy="641.3" rx="13.6" ry="5.7" fill="#4a6a98" transform="rotate(20 509.6 641.3)"/><ellipse cx="508.2" cy="639.3" rx="8.9" ry="2.6" fill="#5f7ba4" transform="rotate(20 508.2 639.3)"/><ellipse cx="283.4" cy="641.5" rx="10.3" ry="5.5" fill="#5a6680" transform="rotate(22 283.4 641.5)"/><ellipse cx="282.3" cy="639.5" rx="6.7" ry="2.5" fill="#6d788f" transform="rotate(22 282.3 639.5)"/><ellipse cx="577.0" cy="642.4" rx="9.7" ry="6.4" fill="#54464e" transform="rotate(3 577.0 642.4)"/><ellipse cx="576.0" cy="640.2" rx="6.3" ry="2.9" fill="#685c63" transform="rotate(3 576.0 640.2)"/><ellipse cx="426.3" cy="642.8" rx="9.7" ry="5.0" fill="#6a92bc" transform="rotate(16 426.3 642.8)"/><ellipse cx="425.3" cy="641.1" rx="6.3" ry="2.2" fill="#7b9fc4" transform="rotate(16 425.3 641.1)"/><ellipse cx="802.2" cy="643.3" rx="10.5" ry="5.5" fill="#54464e" transform="rotate(-4 802.2 643.3)"/><ellipse cx="801.2" cy="641.4" rx="6.9" ry="2.5" fill="#685c63" transform="rotate(-4 801.2 641.4)"/><ellipse cx="255.5" cy="643.5" rx="11.8" ry="5.8" fill="#4a6a98" transform="rotate(7 255.5 643.5)"/><ellipse cx="254.3" cy="641.5" rx="7.7" ry="2.6" fill="#5f7ba4" transform="rotate(7 254.3 641.5)"/><ellipse cx="244.7" cy="643.6" rx="10.2" ry="6.8" fill="#80a8c8" transform="rotate(0 244.7 643.6)"/><ellipse cx="243.7" cy="641.2" rx="6.6" ry="3.1" fill="#8fb2ce" transform="rotate(0 243.7 641.2)"/><ellipse cx="721.2" cy="643.8" rx="9.2" ry="5.8" fill="#44506e" transform="rotate(21 721.2 643.8)"/><ellipse cx="720.3" cy="641.8" rx="6.0" ry="2.6" fill="#5a657f" transform="rotate(21 720.3 641.8)"/><ellipse cx="272.0" cy="644.0" rx="14.3" ry="6.8" fill="#4a6a98" transform="rotate(-8 272.0 644.0)"/><ellipse cx="270.6" cy="641.7" rx="9.3" ry="3.0" fill="#5f7ba4" transform="rotate(-8 270.6 641.7)"/><ellipse cx="346.5" cy="644.1" rx="8.7" ry="5.3" fill="#5a6680" transform="rotate(20 346.5 644.1)"/><ellipse cx="345.6" cy="642.3" rx="5.7" ry="2.4" fill="#6d788f" transform="rotate(20 345.6 642.3)"/><ellipse cx="484.7" cy="644.2" rx="7.8" ry="6.4" fill="#4a6a98" transform="rotate(-10 484.7 644.2)"/><ellipse cx="483.9" cy="641.9" rx="5.1" ry="2.9" fill="#5f7ba4" transform="rotate(-10 483.9 641.9)"/><ellipse cx="784.8" cy="644.3" rx="8.7" ry="4.8" fill="#3a5282" transform="rotate(14 784.8 644.3)"/><ellipse cx="783.9" cy="642.6" rx="5.7" ry="2.2" fill="#516691" transform="rotate(14 783.9 642.6)"/><ellipse cx="391.3" cy="644.3" rx="9.1" ry="4.6" fill="#66624c" transform="rotate(20 391.3 644.3)"/><ellipse cx="390.4" cy="642.7" rx="5.9" ry="2.1" fill="#787461" transform="rotate(20 390.4 642.7)"/><ellipse cx="299.8" cy="644.4" rx="13.3" ry="6.7" fill="#54464e" transform="rotate(-22 299.8 644.4)"/><ellipse cx="298.5" cy="642.0" rx="8.6" ry="3.0" fill="#685c63" transform="rotate(-22 298.5 642.0)"/><ellipse cx="524.2" cy="644.4" rx="11.6" ry="8.3" fill="#5a80b0" transform="rotate(12 524.2 644.4)"/><ellipse cx="523.0" cy="641.5" rx="7.5" ry="3.7" fill="#6d8fb9" transform="rotate(12 523.0 641.5)"/><ellipse cx="453.2" cy="645.7" rx="10.1" ry="6.5" fill="#3a5282" transform="rotate(-17 453.2 645.7)"/><ellipse cx="452.2" cy="643.4" rx="6.5" ry="2.9" fill="#516691" transform="rotate(-17 452.2 643.4)"/><ellipse cx="359.9" cy="645.8" rx="11.6" ry="7.1" fill="#6a92bc" transform="rotate(6 359.9 645.8)"/><ellipse cx="358.7" cy="643.3" rx="7.6" ry="3.2" fill="#7b9fc4" transform="rotate(6 358.7 643.3)"/><ellipse cx="540.1" cy="646.1" rx="9.8" ry="5.1" fill="#66624c" transform="rotate(-15 540.1 646.1)"/><ellipse cx="539.2" cy="644.3" rx="6.4" ry="2.3" fill="#787461" transform="rotate(-15 539.2 644.3)"/><ellipse cx="434.4" cy="646.5" rx="8.4" ry="5.5" fill="#3a5282" transform="rotate(-14 434.4 646.5)"/><ellipse cx="433.5" cy="644.5" rx="5.5" ry="2.5" fill="#516691" transform="rotate(-14 433.5 644.5)"/><ellipse cx="636.9" cy="646.5" rx="10.8" ry="5.1" fill="#5a80b0" transform="rotate(-5 636.9 646.5)"/><ellipse cx="635.8" cy="644.7" rx="7.0" ry="2.3" fill="#6d8fb9" transform="rotate(-5 635.8 644.7)"/><ellipse cx="402.3" cy="646.6" rx="14.2" ry="8.6" fill="#3a5282" transform="rotate(-8 402.3 646.6)"/><ellipse cx="400.8" cy="643.6" rx="9.3" ry="3.9" fill="#516691" transform="rotate(-8 400.8 643.6)"/><ellipse cx="666.3" cy="646.7" rx="9.3" ry="6.9" fill="#80a8c8" transform="rotate(21 666.3 646.7)"/><ellipse cx="665.4" cy="644.3" rx="6.0" ry="3.1" fill="#8fb2ce" transform="rotate(21 665.4 644.3)"/><ellipse cx="466.2" cy="647.1" rx="13.7" ry="8.3" fill="#5a80b0" transform="rotate(3 466.2 647.1)"/><ellipse cx="464.8" cy="644.2" rx="8.9" ry="3.7" fill="#6d8fb9" transform="rotate(3 464.8 644.2)"/><ellipse cx="696.7" cy="647.3" rx="11.2" ry="5.6" fill="#4a6a98" transform="rotate(24 696.7 647.3)"/><ellipse cx="695.5" cy="645.3" rx="7.3" ry="2.5" fill="#5f7ba4" transform="rotate(24 695.5 645.3)"/><ellipse cx="496.7" cy="647.6" rx="10.5" ry="7.7" fill="#44506e" transform="rotate(6 496.7 647.6)"/><ellipse cx="495.6" cy="644.9" rx="6.8" ry="3.5" fill="#5a657f" transform="rotate(6 495.6 644.9)"/></g><g filter="url(#b3)"><rect x="80" y="606" width="170" height="40" fill="#2e3a54"/><ellipse cx="160.5" cy="597.8" rx="11.3" ry="6.5" fill="#3c4454" transform="rotate(-9 160.5 597.8)"/><ellipse cx="136.9" cy="598.2" rx="12.7" ry="10.3" fill="#2c3850" transform="rotate(12 136.9 598.2)"/><ellipse cx="250.9" cy="599.0" rx="11.2" ry="6.9" fill="#4a72a8" transform="rotate(-20 250.9 599.0)"/><ellipse cx="85.0" cy="599.7" rx="14.3" ry="8.1" fill="#4a72a8" transform="rotate(-9 85.0 599.7)"/><ellipse cx="236.5" cy="600.3" rx="15.4" ry="8.4" fill="#3c4454" transform="rotate(16 236.5 600.3)"/><ellipse cx="102.0" cy="602.9" rx="14.4" ry="8.4" fill="#3c4454" transform="rotate(-16 102.0 602.9)"/><ellipse cx="123.4" cy="604.5" rx="18.1" ry="9.9" fill="#2c3850" transform="rotate(-5 123.4 604.5)"/><ellipse cx="211.3" cy="605.8" rx="20.8" ry="11.1" fill="#2c3850" transform="rotate(20 211.3 605.8)"/><ellipse cx="196.3" cy="606.4" rx="16.6" ry="8.4" fill="#5a84b8" transform="rotate(-18 196.3 606.4)"/><ellipse cx="181.3" cy="607.2" rx="12.9" ry="7.3" fill="#5a84b8" transform="rotate(16 181.3 607.2)"/><ellipse cx="141.2" cy="610.6" rx="15.8" ry="11.5" fill="#4a72a8" transform="rotate(-8 141.2 610.6)"/><ellipse cx="83.0" cy="610.7" rx="18.7" ry="9.1" fill="#3c4454" transform="rotate(16 83.0 610.7)"/><ellipse cx="211.1" cy="612.4" rx="12.9" ry="8.3" fill="#4a72a8" transform="rotate(-19 211.1 612.4)"/><ellipse cx="123.1" cy="615.3" rx="17.0" ry="9.3" fill="#3c4454" transform="rotate(-3 123.1 615.3)"/><ellipse cx="173.1" cy="615.7" rx="10.4" ry="7.0" fill="#5a84b8" transform="rotate(-0 173.1 615.7)"/><ellipse cx="243.9" cy="617.0" rx="12.1" ry="5.0" fill="#4a72a8" transform="rotate(15 243.9 617.0)"/><ellipse cx="157.9" cy="618.6" rx="18.3" ry="9.5" fill="#3c4454" transform="rotate(8 157.9 618.6)"/><ellipse cx="105.0" cy="620.1" rx="16.0" ry="8.5" fill="#2c3850" transform="rotate(-12 105.0 620.1)"/><ellipse cx="186.4" cy="620.5" rx="13.3" ry="7.9" fill="#5a84b8" transform="rotate(-23 186.4 620.5)"/><ellipse cx="222.4" cy="621.1" rx="14.5" ry="9.5" fill="#4a72a8" transform="rotate(-1 222.4 621.1)"/><ellipse cx="215.0" cy="624.6" rx="12.8" ry="8.6" fill="#6a94c8" transform="rotate(-18 215.0 624.6)"/><ellipse cx="163.0" cy="624.8" rx="10.2" ry="5.8" fill="#4a72a8" transform="rotate(23 163.0 624.8)"/><ellipse cx="147.5" cy="624.8" rx="14.0" ry="11.1" fill="#5a84b8" transform="rotate(-15 147.5 624.8)"/><ellipse cx="244.9" cy="626.0" rx="14.1" ry="10.1" fill="#5a84b8" transform="rotate(10 244.9 626.0)"/><ellipse cx="119.3" cy="626.3" rx="10.1" ry="7.1" fill="#4a72a8" transform="rotate(5 119.3 626.3)"/><ellipse cx="126.4" cy="626.3" rx="12.6" ry="9.7" fill="#6a94c8" transform="rotate(-5 126.4 626.3)"/><ellipse cx="254.0" cy="630.2" rx="13.3" ry="9.4" fill="#4a72a8" transform="rotate(-20 254.0 630.2)"/><ellipse cx="199.7" cy="633.4" rx="13.5" ry="8.2" fill="#4a72a8" transform="rotate(21 199.7 633.4)"/><ellipse cx="94.4" cy="634.2" rx="13.4" ry="8.8" fill="#4a72a8" transform="rotate(21 94.4 634.2)"/><ellipse cx="74.9" cy="635.0" rx="14.7" ry="9.3" fill="#4a72a8" transform="rotate(15 74.9 635.0)"/><ellipse cx="182.2" cy="636.3" rx="18.0" ry="11.7" fill="#2c3850" transform="rotate(18 182.2 636.3)"/><ellipse cx="90.0" cy="641.1" rx="19.1" ry="9.3" fill="#2c3850" transform="rotate(-23 90.0 641.1)"/><ellipse cx="201.7" cy="643.8" rx="14.3" ry="10.2" fill="#5a84b8" transform="rotate(-16 201.7 643.8)"/><ellipse cx="233.2" cy="644.4" rx="11.6" ry="6.1" fill="#2c3850" transform="rotate(-6 233.2 644.4)"/><ellipse cx="138.9" cy="645.8" rx="16.6" ry="10.3" fill="#3c4454" transform="rotate(-12 138.9 645.8)"/><ellipse cx="122.8" cy="645.9" rx="15.7" ry="9.3" fill="#4a72a8" transform="rotate(-8 122.8 645.9)"/><ellipse cx="180.2" cy="646.0" rx="13.5" ry="9.7" fill="#2c3850" transform="rotate(10 180.2 646.0)"/><ellipse cx="219.1" cy="646.1" rx="12.2" ry="7.1" fill="#6a94c8" transform="rotate(-8 219.1 646.1)"/><ellipse cx="70.5" cy="646.9" rx="19.4" ry="8.1" fill="#4a72a8" transform="rotate(8 70.5 646.9)"/><ellipse cx="106.8" cy="647.7" rx="14.1" ry="11.3" fill="#5a84b8" transform="rotate(-1 106.8 647.7)"/><ellipse cx="248.4" cy="647.9" rx="11.1" ry="6.4" fill="#4a72a8" transform="rotate(20 248.4 647.9)"/><ellipse cx="168.0" cy="650.4" rx="13.5" ry="9.4" fill="#5a84b8" transform="rotate(22 168.0 650.4)"/></g><g filter="url(#b3)"><path d="M1150 326 L1310 307 L1310 372 L1150 376 Z" fill="#485a8e"/><ellipse cx="1235.0" cy="396.0" rx="120.0" ry="26.0" fill="#4a7cb8"/><ellipse cx="1188.1" cy="385.8" rx="21.0" ry="7.3" fill="#3a6aa8" transform="rotate(3 1188.1 385.8)" opacity="0.85"/><ellipse cx="1246.9" cy="413.2" rx="13.1" ry="7.8" fill="#4a78b8" transform="rotate(20 1246.9 413.2)" opacity="0.85"/><ellipse cx="1225.2" cy="407.7" rx="14.8" ry="11.9" fill="#4a78b8" transform="rotate(-11 1225.2 407.7)" opacity="0.85"/><ellipse cx="1174.3" cy="414.4" rx="18.9" ry="11.2" fill="#4a78b8" transform="rotate(-17 1174.3 414.4)" opacity="0.85"/><ellipse cx="1271.3" cy="389.3" rx="19.4" ry="9.7" fill="#3a6aa8" transform="rotate(-9 1271.3 389.3)" opacity="0.85"/><ellipse cx="1245.2" cy="414.0" rx="18.6" ry="13.1" fill="#4a78b8" transform="rotate(-4 1245.2 414.0)" opacity="0.85"/><ellipse cx="1278.1" cy="378.3" rx="20.5" ry="4.7" fill="#6a9ad0" transform="rotate(-15 1278.1 378.3)" opacity="0.85"/><ellipse cx="1184.7" cy="417.4" rx="19.3" ry="13.0" fill="#4a78b8" transform="rotate(-3 1184.7 417.4)" opacity="0.85"/><ellipse cx="1283.4" cy="388.1" rx="17.0" ry="8.1" fill="#7aa4d0" transform="rotate(16 1283.4 388.1)" opacity="0.85"/><ellipse cx="1259.1" cy="414.7" rx="21.9" ry="11.2" fill="#3a6aa8" transform="rotate(-13 1259.1 414.7)" opacity="0.85"/><ellipse cx="1287.7" cy="417.3" rx="16.8" ry="11.8" fill="#7aa4d0" transform="rotate(-12 1287.7 417.3)" opacity="0.85"/><ellipse cx="1283.1" cy="388.0" rx="11.5" ry="7.5" fill="#3a6aa8" transform="rotate(6 1283.1 388.0)" opacity="0.85"/><ellipse cx="1227.4" cy="370.8" rx="14.9" ry="4.5" fill="#5a90d0" transform="rotate(-8 1227.4 370.8)" opacity="0.85"/><ellipse cx="1273.0" cy="410.5" rx="17.3" ry="11.5" fill="#5a90d0" transform="rotate(-5 1273.0 410.5)" opacity="0.85"/><ellipse cx="1243.8" cy="386.3" rx="16.1" ry="10.3" fill="#3a6aa8" transform="rotate(-8 1243.8 386.3)" opacity="0.85"/><ellipse cx="1162.3" cy="390.0" rx="21.4" ry="10.6" fill="#5a90d0" transform="rotate(-8 1162.3 390.0)" opacity="0.85"/><ellipse cx="1192.1" cy="396.7" rx="13.8" ry="11.3" fill="#3a6aa8" transform="rotate(16 1192.1 396.7)" opacity="0.85"/><ellipse cx="1210.4" cy="379.5" rx="14.6" ry="8.8" fill="#7aa4d0" transform="rotate(7 1210.4 379.5)" opacity="0.85"/><ellipse cx="1166.4" cy="418.0" rx="13.3" ry="11.3" fill="#7aa4d0" transform="rotate(9 1166.4 418.0)" opacity="0.85"/><ellipse cx="1299.8" cy="377.8" rx="16.3" ry="7.0" fill="#3a6aa8" transform="rotate(-20 1299.8 377.8)" opacity="0.85"/><ellipse cx="1216.4" cy="388.5" rx="14.5" ry="8.2" fill="#5a90d0" transform="rotate(-15 1216.4 388.5)" opacity="0.85"/><ellipse cx="1251.4" cy="369.9" rx="18.2" ry="5.4" fill="#3a6aa8" transform="rotate(8 1251.4 369.9)" opacity="0.85"/><ellipse cx="1268.1" cy="346.7" rx="21.5" ry="2.6" fill="#5a90d0" transform="rotate(-5 1268.1 346.7)" opacity="0.85"/><ellipse cx="1250.5" cy="367.4" rx="13.8" ry="5.2" fill="#7aa4d0" transform="rotate(-7 1250.5 367.4)" opacity="0.85"/><ellipse cx="1209.1" cy="389.7" rx="19.4" ry="5.4" fill="#3a6aa8" transform="rotate(13 1209.1 389.7)" opacity="0.85"/><ellipse cx="1305.4" cy="396.3" rx="13.7" ry="6.6" fill="#6a9ad0" transform="rotate(12 1305.4 396.3)" opacity="0.85"/></g><g filter="url(#b1)"><ellipse cx="1164.0" cy="448.0" rx="22.0" ry="41.0" fill="#9a9cac"/><ellipse cx="1160.0" cy="444.0" rx="18.0" ry="36.0" fill="#b4b4bc"/></g><g filter="url(#b3)"><rect x="0" y="330" width="30" height="240" fill="#3a6aa4"/><ellipse cx="14.0" cy="372.0" rx="16.0" ry="10.0" fill="#5a88c0"/><ellipse cx="14.0" cy="394.0" rx="18.0" ry="8.0" fill="#2a4a7a"/><ellipse cx="16.0" cy="422.0" rx="20.0" ry="16.0" fill="#6a9ad0"/><ellipse cx="12.0" cy="452.0" rx="18.0" ry="8.0" fill="#2a4870"/><ellipse cx="14.0" cy="470.0" rx="18.0" ry="6.0" fill="#4a7cb8"/><ellipse cx="12.0" cy="500.0" rx="18.0" ry="16.0" fill="#284870"/><ellipse cx="12.0" cy="530.0" rx="18.0" ry="10.0" fill="#305070"/><ellipse cx="6.0" cy="550.0" rx="10.0" ry="6.0" fill="#6a5a58" opacity="0.8"/><ellipse cx="14.0" cy="605.0" rx="28.0" ry="46.0" fill="#3a82c6"/><ellipse cx="38.0" cy="638.0" rx="54.0" ry="34.0" fill="#3c84c8"/><ellipse cx="578.0" cy="644.0" rx="40.0" ry="26.0" fill="#5a5a80"/><ellipse cx="575.0" cy="624.0" rx="30.0" ry="8.0" fill="#6a7098"/></g></svg>

<div class="win" id="w1">
  <div class="hb">
    <svg class="ab" style="left:0;top:0" width="767" height="52" viewBox="25 13 767 52">
      <g stroke="#a6a6a6" stroke-width="1.1" fill="none">
        <path d="M46 36 L52.5 42 M52.5 36 L46 42"/>
        <path d="M77 39.5 H85"/>
        <rect x="109.5" y="35.5" width="7" height="7"/>
      </g>
      <rect x="723" y="24.5" width="25" height="28.5" rx="1" fill="#464646" stroke="#393939" stroke-width="1"/>
      <rect x="755.5" y="24.5" width="25.5" height="28.5" rx="1" fill="#464646" stroke="#393939" stroke-width="1"/>
      <g stroke="#b4b4b4" fill="none" stroke-linecap="round">
        <circle cx="734.5" cy="37.5" r="4.6" stroke-width="1.9"/>
        <path d="M738.2 41.2 L742.4 45.4" stroke-width="1.9"/>
        <path d="M765 40 L768.2 43 L774.3 36.8" stroke-width="3.2" stroke="#acacac" stroke-linecap="butt"/>
      </g>
    </svg>
  </div>
  <svg class="ab" style="left:0;top:0" width="767" height="599" viewBox="25 13 767 599">
    <defs>
      <mask id="note" maskUnits="userSpaceOnUse" x="250" y="180" width="300" height="240">
        <g fill="#fff">
          <circle cx="336" cy="344.5" r="40" fill="none" stroke="#fff" stroke-width="32"/>
          <circle cx="464" cy="344.5" r="40" fill="none" stroke="#fff" stroke-width="32"/>
          <rect x="360" y="192.5" width="32" height="152"/>
          <rect x="488" y="192.5" width="32" height="152"/>
          <rect x="360" y="192.5" width="160" height="32.5"/>
        </g>
      </mask>
      <filter id="bl8" x="-50%" y="-50%" width="200%" height="200%"><feGaussianBlur stdDeviation="8"/></filter>
      <filter id="bl4" x="-50%" y="-50%" width="200%" height="200%"><feGaussianBlur stdDeviation="4"/></filter>
    </defs>
    <g mask="url(#note)">
      <rect x="270" y="180" width="260" height="230" fill="#161818"/>
      <g filter="url(#bl8)">
        <ellipse cx="378" cy="262" rx="16" ry="34" fill="#48534f"/>
        <ellipse cx="376" cy="205" rx="16" ry="14" fill="#262c2c"/>
        <ellipse cx="385" cy="352" rx="16" ry="30" fill="#2a5a90"/>
        <ellipse cx="350" cy="388" rx="26" ry="10" fill="#1c3048"/>
        <ellipse cx="425" cy="208" rx="40" ry="13" fill="#1a1f2a"/>
        <ellipse cx="482" cy="212" rx="20" ry="12" fill="#8c9ca0"/>
        <ellipse cx="470" cy="195" rx="30" ry="5" fill="#c8a8b6"/>
      </g>
      <g filter="url(#bl4)">
        <ellipse cx="316" cy="296" rx="50" ry="34" fill="#b05a4c" transform="rotate(-18 316 296)"/>
        <ellipse cx="322" cy="288" rx="36" ry="16" fill="#c47a6a" transform="rotate(-15 322 288)"/>
        <ellipse cx="292" cy="334" rx="14" ry="10" fill="#8a3c36"/>
      </g>
      <path d="M358 280 Q366 296 356 311 Q350 318 342 321" stroke="#f0d8d0" stroke-width="2.2" fill="none" opacity="0.9"/>
      <g filter="url(#bl4)">
        <rect x="400" y="280" width="130" height="130" fill="#88a8c8"/>
        <ellipse cx="475" cy="300" rx="30" ry="14" fill="#b8c8ca"/>
        <ellipse cx="425" cy="318" rx="22" ry="14" fill="#2c3a48" transform="rotate(-35 425 318)"/>
        <ellipse cx="455" cy="300" rx="16" ry="8" fill="#6c8090"/>
        <ellipse cx="435" cy="385" rx="30" ry="16" fill="#9ebcdc"/>
        <ellipse cx="470" cy="395" rx="25" ry="10" fill="#a0bedc"/>
      </g>
      <path d="M410 332 Q440 300 478 290" stroke="#5a7080" stroke-width="1" fill="none"/>
    </g>
    <text x="367.5" y="475.6" textLength="80" lengthAdjust="spacingAndGlyphs" font-family="Liberation Sans" font-weight="bold" font-size="27" fill="#4a4a4a">Эй DJ</text>
    <text x="245" y="512.8" textLength="92" lengthAdjust="spacingAndGlyphs" font-family="Liberation Sans" font-size="14" fill="#9a9a9a">Содержимое</text>
    <text x="340.6" y="512.8" textLength="117" lengthAdjust="spacingAndGlyphs" font-family="Liberation Sans" font-size="14" fill="#8a98c8">Папка с музыкой</text>
    <rect x="340.5" y="515.6" width="117" height="1.1" fill="#8a98c8"/>
    <text x="461.2" y="512.8" letter-spacing="0.9" font-family="Liberation Sans" font-size="14" fill="#9a9a9a">появится здесь</text>
  </svg>
</div>

<div class="win" id="w2">
  <div class="hb"></div>
  <svg class="ab" style="left:0;top:0" width="665" height="452" viewBox="489 65 665 452">
    <g stroke="#c4c4c4" fill="none">
      <path d="M505.5 75.5 L512.5 82.5 M512.5 75.5 L505.5 82.5" stroke-width="1.7"/>
      <path d="M529 79 H537" stroke-width="2"/>
      <rect x="554" y="76" width="6" height="6" stroke-width="2"/>
    </g>
    <text x="579.2" y="84.8" textLength="46" lengthAdjust="spacingAndGlyphs" font-family="Liberation Sans" font-weight="bold" font-size="13.5" fill="#aaaaaa">Видео</text>
    <rect x="501" y="103.5" width="25.5" height="29" rx="1" fill="#4d4d4d"/>
    <path d="M517.6 112.6 L512 118 L517.6 123.4" stroke="#f2f2f2" stroke-width="2" fill="none" stroke-linecap="round" stroke-linejoin="round"/>
    <text x="668.2" y="123.9" textLength="307" lengthAdjust="spacing" font-family="Liberation Sans" font-weight="bold" font-size="14" fill="#eeeeee">Imagine Dragons - Radioactive (ACOUSTIC)</text>
    <rect x="1118" y="103.5" width="25.5" height="29" rx="1" fill="#4d4d4d"/>
    <g fill="#f4f4f4">
      <path d="M1132 110.8 H1138.2 V117 Z"/>
      <path d="M1124 118.8 V125 H1130.2 Z"/>
      <path d="M1136.4 112.6 L1131.2 117.8 M1129.9 119.1 L1127 122" stroke="#f4f4f4" stroke-width="1.8"/>
    </g>
    <path d="M749.3 182 L749.3 197.8 L752.8 194.9 L756.4 203.4 L759 202.3 L755.6 194.5 L760.2 193.6 Z" fill="#c6c6c6"/>
    <rect x="522" y="443" width="599.5" height="41.5" rx="2" fill="#3e3e3e"/>
    <rect x="529.5" y="449.5" width="25" height="28.5" rx="2" fill="#3d3d3d" stroke="#363636" stroke-width="1"/>
    <rect x="555.5" y="450" width="57.5" height="28" fill="#4b4b4b"/>
    <rect x="615" y="449.5" width="25" height="28.5" rx="2" fill="#3d3d3d" stroke="#363636" stroke-width="1"/>
    <g fill="#8e8e8e">
      <rect x="533.8" y="459.7" width="2.1" height="8.5"/>
      <path d="M535.9 464 L543 459.7 V468.2 Z M543 464 L550 459.7 V468.2 Z"/>
      <rect x="633.9" y="459.7" width="2.1" height="8.5"/>
      <path d="M633.8 464 L626.8 459.7 V468.2 Z M626.8 464 L619.9 459.7 V468.2 Z"/>
    </g>
    <g fill="#f2f2f2">
      <rect x="580.8" y="459.7" width="3.1" height="8.5"/>
      <rect x="586" y="459.7" width="3.2" height="8.5"/>
    </g>
    <text x="656.3" y="469.1" textLength="28" lengthAdjust="spacingAndGlyphs" font-family="Liberation Sans" font-size="13" fill="#eeeeee">0:19</text>
    <rect x="726.5" y="462" width="282.5" height="4" fill="#363636"/><rect x="726.5" y="463" width="282.5" height="2" fill="#484848"/>
    <rect x="688.7" y="461.9" width="23" height="4.3" fill="#e5504a"/>
    <circle cx="719" cy="464" r="6.8" fill="#3a3a3a" opacity="0.75"/>
    <text x="1013.6" y="469.1" textLength="31.8" lengthAdjust="spacingAndGlyphs" font-family="Liberation Sans" font-size="13" fill="#eeeeee">-4:13</text>
    <rect x="1063" y="450" width="25.4" height="28" fill="#4b4b4b"/>
    <g fill="#ececec">
      <rect x="1074" y="456" width="4.1" height="4"/>
      <rect x="1074" y="462.1" width="4.1" height="4"/>
      <rect x="1074" y="468.1" width="4.1" height="4"/>
      <path d="M1094.8 461.3 H1098 L1101 459 V468.8 L1098 466.9 H1094.8 Z"/>
    </g>
    <g stroke="#ececec" fill="none" stroke-width="1.5">
      <path d="M1102.4 461.4 A3.6 3.6 0 0 1 1102.4 466.8"/>
      <path d="M1104.4 459 A6.6 6.6 0 0 1 1104.4 469.2"/>
      <path d="M1106.6 456.6 A9.6 9.6 0 0 1 1106.6 471.6"/>
    </g>
  </svg>
</div>
</body></html>
